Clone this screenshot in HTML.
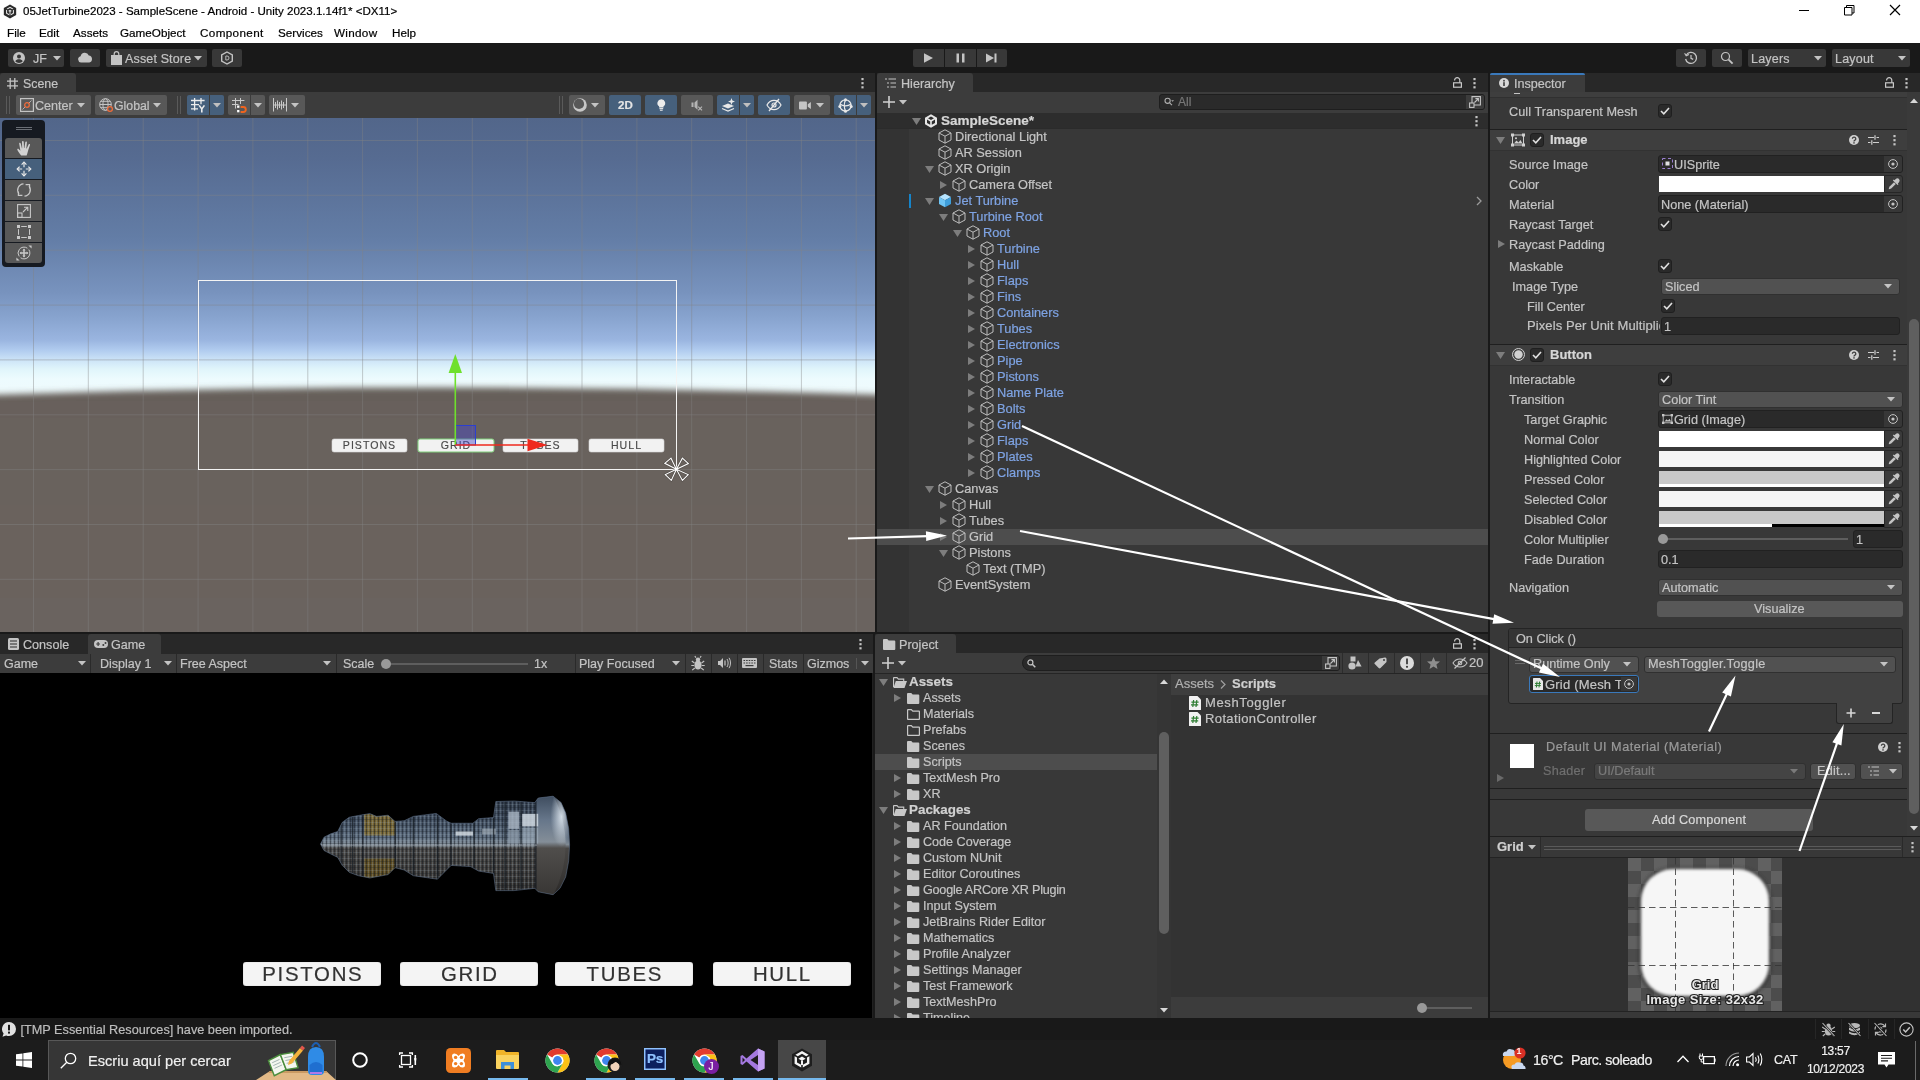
<!DOCTYPE html>
<html><head><meta charset="utf-8"><title>Unity</title>
<style>
*{box-sizing:border-box}
html,body{margin:0;padding:0}
body{width:1920px;height:1080px;position:relative;overflow:hidden;background:#191919;font:12.5px "Liberation Sans",sans-serif;color:#c4c4c4;line-height:16px}
.a{position:absolute}
.t{position:absolute;white-space:nowrap;line-height:16px;-webkit-text-stroke:0.2px}
.b{font-weight:bold}
.btn{position:absolute;background:#585858;border-radius:2px}
.tb{position:absolute;background:#383838;border-radius:2px}
.on{background:#46607c}
svg{position:absolute;overflow:visible}
.fld{position:absolute;background:#2a2a2a;border:1px solid #212121;border-radius:3px;height:18px}
.dd{position:absolute;background:#515151;border:1px solid #303030;border-radius:3px;height:18px}
.cb{position:absolute;width:14px;height:14px;background:#2a2a2a;border:1px solid #1f1f1f;border-radius:3px}
.pre{color:#7ea3e3}
</style></head>
<body>
<div id="root" style="position:absolute;left:0;top:0;width:1920px;height:1080px;will-change:transform;overflow:hidden">

<!-- Windows title bar + menu -->
<div class="a" style="left:0;top:0;width:1920px;height:43px;background:#fff"></div>
<svg style="left:3px;top:3.5px" width="14" height="15" viewBox="0 0 17 18"><path d="M8.5 0.5 L16 4.8 V13.2 L8.5 17.5 L1 13.2 V4.8 Z" fill="#2b2b2b"/><path d="M8.5 3.2 L12.6 5.6 L11.3 6.4 L8.5 4.8 L5.7 6.4 L4.4 5.6 Z M3.7 6.8 L5 7.5 V10.7 L7.8 12.3 V13.9 L3.7 11.5 Z M13.3 6.8 V11.5 L9.2 13.9 V12.3 L12 10.7 V7.5 Z M8.5 7 L10.8 8.3 L8.5 9.6 L6.2 8.3 Z" fill="#e8e8e8"/><path d="M8.5 9.6 V12.3" stroke="#e8e8e8" stroke-width="1.2"/></svg>
<div class="t" style="left:23px;top:3px;font-size:11.55px;color:#000">05JetTurbine2023 - SampleScene - Android - Unity 2023.1.14f1* &lt;DX11&gt;</div>
<div class="t" style="left:7px;top:25px;font-size:11.7px;color:#000">File</div>
<div class="t" style="left:39px;top:25px;font-size:11.7px;color:#000">Edit</div>
<div class="t" style="left:73px;top:25px;font-size:11.7px;color:#000">Assets</div>
<div class="t" style="left:120px;top:25px;font-size:11.7px;color:#000">GameObject</div>
<div class="t" style="left:200px;top:25px;font-size:11.7px;letter-spacing:.35px;color:#000">Component</div>
<div class="t" style="left:278px;top:25px;font-size:11.7px;color:#000">Services</div>
<div class="t" style="left:334px;top:25px;font-size:11.7px;letter-spacing:.3px;color:#000">Window</div>
<div class="t" style="left:392px;top:25px;font-size:11.7px;color:#000">Help</div>
<svg style="left:1790px;top:0" width="130" height="22" viewBox="0 0 130 22" fill="none" stroke="#000" stroke-width="1"><path d="M9 10.5 H19"/><path d="M54.5 7.5 H62 V15 H54.5 Z M56.5 7.5 V5.5 H64 V13 H62"/><path d="M100 5 L110 15 M110 5 L100 15" stroke-width="1.2"/></svg>

<!-- Unity main toolbar -->
<div class="a" style="left:0;top:43px;width:1920px;height:30px;background:#191919"></div>
<div class="tb" style="left:8px;top:49px;width:56px;height:18px"></div>
<svg style="left:13px;top:52px" width="12" height="12" viewBox="0 0 12 12"><circle cx="6" cy="6" r="6" fill="#c4c4c4"/><circle cx="6" cy="4.4" r="2" fill="#383838"/><path d="M2.3 9.3 C3 7.6 4.5 7.2 6 7.2 S9 7.6 9.7 9.3 C8.8 10.5 7.5 11 6 11 S3.2 10.5 2.3 9.3Z" fill="#383838"/></svg>
<div class="t" style="left:33px;top:50.6px;font-size:12.5px;color:#c4c4c4">JF</div>
<svg style="left:53px;top:56px" width="8" height="5" viewBox="0 0 8 5"><path d="M0 0 H8 L4 4.5 Z" fill="#c4c4c4"/></svg>
<div class="tb" style="left:70px;top:49px;width:30px;height:18px"></div>
<svg style="left:77px;top:52px" width="16" height="11" viewBox="0 0 16 11"><path d="M4 10.5 A3.2 3.2 0 0 1 3.6 4.2 A4.3 4.3 0 0 1 11.8 3.6 A3.5 3.5 0 0 1 12.3 10.5 Z" fill="#c4c4c4"/></svg>
<div class="tb" style="left:106px;top:49px;width:101px;height:18px"></div>
<svg style="left:111px;top:51px" width="11" height="14" viewBox="0 0 11 14"><path d="M0 4 H11 V14 H0 Z" fill="#c4c4c4"/><path d="M3.2 5 V3 A2.3 2.3 0 0 1 7.8 3 V5" fill="none" stroke="#c4c4c4" stroke-width="1.2"/></svg>
<div class="t" style="left:125px;top:50.6px;font-size:12.5px;letter-spacing:.15px">Asset Store</div>
<svg style="left:194px;top:56px" width="8" height="5" viewBox="0 0 8 5"><path d="M0 0 H8 L4 4.5 Z" fill="#c4c4c4"/></svg>
<div class="tb" style="left:212px;top:49px;width:30px;height:18px"></div>
<svg style="left:220px;top:51px" width="14" height="14" viewBox="0 0 14 14" fill="none" stroke="#c4c4c4"><path d="M7 1 L12.3 4 V10 L7 13 L1.7 10 V4 Z" stroke-width="1.4"/><path d="M5.8 5 H7 A2 2 0 0 1 7 9 H5.8 Z" stroke-width="0.9"/></svg>

<div class="tb" style="left:913px;top:49px;width:31px;height:18px;border-radius:2px 0 0 2px"></div>
<div class="tb" style="left:945px;top:49px;width:31px;height:18px;border-radius:0"></div>
<div class="tb" style="left:977px;top:49px;width:30px;height:18px;border-radius:0 2px 2px 0"></div>
<svg style="left:913px;top:49px" width="94" height="18" viewBox="0 0 94 18" fill="#c4c4c4"><path d="M11 4.2 L20 9 L11 13.8 Z"/><path d="M43.5 4.5 H46 V13.5 H43.5 Z M49 4.5 H51.5 V13.5 H49 Z"/><path d="M73 4.5 L81 9 L73 13.5 Z M81.5 4.5 H83.5 V13.5 H81.5 Z"/></svg>

<div class="tb" style="left:1676px;top:49px;width:30px;height:18px"></div>
<svg style="left:1684px;top:51px" width="14" height="14" viewBox="0 0 14 14" fill="none" stroke="#c4c4c4" stroke-width="1.3"><path d="M2.2 4.2 A5.5 5.5 0 1 1 1.6 8"/><path d="M0.6 2.2 L2.2 4.8 L5 3.6" stroke-width="1.1"/><path d="M7 4 V7.3 L9.2 8.4" stroke-width="1.2"/></svg>
<div class="tb" style="left:1712px;top:49px;width:30px;height:18px"></div>
<svg style="left:1720px;top:51px" width="14" height="14" viewBox="0 0 14 14" fill="none" stroke="#c4c4c4"><circle cx="5.5" cy="5.5" r="4" stroke-width="1.2"/><path d="M8.6 8.6 L12.6 12.6" stroke-width="1.8"/></svg>
<div class="tb" style="left:1748px;top:49px;width:78px;height:18px"></div>
<div class="t" style="left:1751px;top:50.6px;font-size:12.5px;letter-spacing:.2px">Layers</div>
<svg style="left:1814px;top:56px" width="8" height="5" viewBox="0 0 8 5"><path d="M0 0 H8 L4 4.5 Z" fill="#c4c4c4"/></svg>
<div class="tb" style="left:1832px;top:49px;width:78px;height:18px"></div>
<div class="t" style="left:1835px;top:50.6px;font-size:12.5px;letter-spacing:.2px">Layout</div>
<svg style="left:1898px;top:56px" width="8" height="5" viewBox="0 0 8 5"><path d="M0 0 H8 L4 4.5 Z" fill="#c4c4c4"/></svg>

<!-- Scene panel -->
<div class="a" style="left:0;top:73px;width:875px;height:19px;background:#282828"></div>
<div class="a" style="left:0;top:73px;width:76px;height:20px;background:#3c3c3c;border-radius:3px 3px 0 0"></div>
<svg style="left:7px;top:78px" width="11" height="11" viewBox="0 0 11 11" stroke="#c4c4c4" stroke-width="1.3" fill="none"><path d="M3.2 0 V11 M7.8 0 V11 M0 3.2 H11 M0 7.8 H11"/></svg>
<div class="t" style="left:23px;top:75.6px;font-size:12.4px">Scene</div>
<svg style="left:861px;top:77px" width="3" height="11" viewBox="0 0 3 11" fill="#c4c4c4"><rect x="0.4" y="1" width="2.2" height="2.2"/><rect x="0.4" y="5.1" width="2.2" height="2.2"/><rect x="0.4" y="9.2" width="2.2" height="2.2"/></svg>
<div class="a" style="left:0;top:92px;width:875px;height:26px;background:#3c3c3c"></div>
<div class="a" style="left:6px;top:96px;width:1px;height:18px;background:#5a5a5a"></div>
<div class="a" style="left:9px;top:96px;width:1px;height:18px;background:#5a5a5a"></div>
<div class="a" style="left:177px;top:96px;width:1px;height:18px;background:#5a5a5a"></div>
<div class="a" style="left:180px;top:96px;width:1px;height:18px;background:#5a5a5a"></div>
<div class="a" style="left:559px;top:96px;width:1px;height:18px;background:#5a5a5a"></div>
<div class="a" style="left:562px;top:96px;width:1px;height:18px;background:#5a5a5a"></div>
<div class="btn" style="left:16px;top:95px;width:75px;height:20px;border-radius:2px"></div>
<svg style="left:20px;top:98px" width="14" height="14" viewBox="0 0 14 14" fill="none"><rect x="0.6" y="0.6" width="12.8" height="12.8" stroke="#c4c4c4" stroke-width="1.2"/><path d="M2.5 11.5 L11.5 2.5" stroke="#c4c4c4" stroke-width="0.8"/><circle cx="7" cy="7" r="2.3" stroke="#ef6b3a" stroke-width="1.3" fill="#585858"/></svg>
<div class="t" style="left:35px;top:97.5px;font-size:12.6px">Center</div>
<svg style="left:77px;top:103px" width="8" height="5" viewBox="0 0 8 5"><path d="M0 0 H8 L4 4.5 Z" fill="#c4c4c4"/></svg>
<div class="btn" style="left:95px;top:95px;width:72px;height:20px;border-radius:2px"></div>
<svg style="left:99px;top:98px" width="15" height="15" viewBox="0 0 15 15" fill="none" stroke="#c4c4c4" stroke-width="1"><circle cx="6.5" cy="6.5" r="5.8"/><ellipse cx="6.5" cy="6.5" rx="2.6" ry="5.8"/><path d="M0.7 6.5 H12.3 M1.8 3.3 H11.2 M1.8 9.7 H11.2"/><circle cx="11" cy="11" r="2.4" stroke="#ef6b3a" stroke-width="1.3" fill="#585858"/></svg>
<div class="t" style="left:114px;top:97.5px;font-size:12.3px">Global</div>
<svg style="left:153px;top:103px" width="8" height="5" viewBox="0 0 8 5"><path d="M0 0 H8 L4 4.5 Z" fill="#c4c4c4"/></svg>
<div class="btn on" style="left:187px;top:95px;width:22px;height:20px;border-radius:2px 0 0 2px"></div>
<div class="btn on" style="left:210px;top:95px;width:14px;height:20px;border-radius:0 2px 2px 0"></div>
<svg style="left:191px;top:98px" width="14" height="15" viewBox="0 0 14 15" fill="none" stroke="#ececec" stroke-width="1.3"><path d="M3.6 0 V12.6 M10 0 V6.2 M0 2.5 H13.6 M0 6.6 H8 M0 10.8 H7"/><path d="M8.2 7.4 L10.8 11 L13.4 7.4 M10.8 11 V14.6" stroke-width="1.6"/></svg>
<svg style="left:213px;top:103px" width="8" height="5" viewBox="0 0 8 5"><path d="M0 0 H8 L4 4.5 Z" fill="#c0c0c0"/></svg>
<div class="btn" style="left:228px;top:95px;width:22px;height:20px;border-radius:2px 0 0 2px"></div>
<div class="btn" style="left:251px;top:95px;width:14px;height:20px;border-radius:0 2px 2px 0"></div>
<svg style="left:232px;top:98px" width="15" height="15" viewBox="0 0 15 15" fill="none" stroke="#c8c8c8" stroke-width="1.1"><path d="M3.5 0 V10.5 M8.5 0 V6 M0 2.5 H12.4 M0 6.5 H6.5" stroke-width="1"/><rect x="5.1" y="7.5" width="2.3" height="2.3" fill="#fff" stroke="none"/><rect x="5.1" y="12" width="2.3" height="2.3" fill="#fff" stroke="none"/><path d="M8.6 9 H11.3 A2.5 2.5 0 0 1 11.3 14 H8.6" stroke="#f0641e" stroke-width="1.9"/></svg>
<svg style="left:254px;top:103px" width="8" height="5" viewBox="0 0 8 5"><path d="M0 0 H8 L4 4.5 Z" fill="#c4c4c4"/></svg>
<div class="btn" style="left:269px;top:95px;width:36px;height:20px;border-radius:2px"></div>
<svg style="left:273px;top:98px" width="14" height="14" viewBox="0 0 14 14" fill="none" stroke="#c8c8c8" stroke-width="1"><path d="M0.5 0 V13.5 M13.5 0 V13.5 M0.5 7 H13.5 M2.5 4 V10 M4.5 2.5 V11.5 M6.5 4 V10 M8.5 2.5 V11.5 M10.5 4 V10"/></svg>
<svg style="left:291px;top:103px" width="8" height="5" viewBox="0 0 8 5"><path d="M0 0 H8 L4 4.5 Z" fill="#c4c4c4"/></svg>
<div class="btn" style="left:569px;top:95px;width:36px;height:20px;border-radius:2px"></div>
<svg style="left:573px;top:98px" width="14" height="14" viewBox="0 0 14 14"><circle cx="7" cy="7" r="6.8" fill="#c8c8c8"/><circle cx="6" cy="5.9" r="5.1" fill="#585858"/></svg>
<svg style="left:591px;top:103px" width="8" height="5" viewBox="0 0 8 5"><path d="M0 0 H8 L4 4.5 Z" fill="#c4c4c4"/></svg>
<div class="btn on" style="left:609px;top:95px;width:32px;height:20px;border-radius:2px"></div>
<div class="t b" style="left:618px;top:97px;font-size:11.5px;color:#e4e4e4">2D</div>
<div class="btn on" style="left:645px;top:95px;width:32px;height:20px;border-radius:2px"></div>
<svg style="left:656.5px;top:99px" width="8.6" height="12" viewBox="0 0 10 14" fill="#ececec"><path d="M5 0.3 A4.5 4.5 0 0 1 7.6 8.5 V9.8 H2.4 V8.5 A4.5 4.5 0 0 1 5 0.3Z"/><rect x="2.8" y="10.6" width="4.4" height="1.3"/><rect x="3.4" y="12.5" width="3.2" height="1.2"/></svg>
<div class="btn" style="left:681px;top:95px;width:32px;height:20px;border-radius:2px"></div>
<svg style="left:691px;top:99px" width="14" height="12" viewBox="0 0 14 12" fill="none" stroke="#b4b4b4"><path d="M0.5 3.5 H2.5 V8 H0.5 Z M3.5 3.5 L6.5 0.8 V10.7 L3.5 8Z" fill="#b4b4b4" stroke="none"/><path d="M7.2 7.6 L11 11.4 M11 7.6 L7.2 11.4" stroke-width="1.2"/></svg>
<div class="btn on" style="left:717px;top:95px;width:22px;height:20px;border-radius:2px 0 0 2px"></div>
<div class="btn on" style="left:740px;top:95px;width:14px;height:20px;border-radius:0 2px 2px 0"></div>
<svg style="left:721px;top:98px" width="15" height="14" viewBox="0 0 15 14" fill="#e8e8e8"><path d="M7 5.5 L13 8 L7 10.5 L1 8 Z"/><path d="M1 10.5 L7 13 L13 10.5" fill="none" stroke="#e8e8e8" stroke-width="1.2"/><path d="M10.5 0 L11.4 2.6 L14 3.5 L11.4 4.4 L10.5 7 L9.6 4.4 L7 3.5 L9.6 2.6Z"/></svg>
<svg style="left:743px;top:103px" width="8" height="5" viewBox="0 0 8 5"><path d="M0 0 H8 L4 4.5 Z" fill="#c0c0c0"/></svg>
<div class="btn on" style="left:758px;top:95px;width:32px;height:20px;border-radius:2px"></div>
<svg style="left:766px;top:98px" width="16" height="14" viewBox="0 0 16 14" fill="none" stroke="#e8e8e8" stroke-width="1.2"><path d="M1 7 C3 3.2 5.5 2.3 8 2.3 S13 3.2 15 7 C13 10.800000000000001 10.5 11.7 8 11.7 S3 10.8 1 7Z"/><circle cx="8" cy="7" r="2" /><path d="M3 13 L13 1" stroke-width="1.3"/></svg>
<div class="btn" style="left:794px;top:95px;width:36px;height:20px;border-radius:2px"></div>
<svg style="left:799px;top:100.5px" width="12.3" height="9" viewBox="0 0 14 10" fill="#c4c4c4"><rect x="0" y="0.5" width="9" height="9" rx="1"/><path d="M10 3.5 L13.5 1 V9 L10 6.5Z"/></svg>
<svg style="left:816px;top:103px" width="8" height="5" viewBox="0 0 8 5"><path d="M0 0 H8 L4 4.5 Z" fill="#c4c4c4"/></svg>
<div class="btn on" style="left:834px;top:95px;width:22px;height:20px;border-radius:2px 0 0 2px"></div>
<div class="btn on" style="left:857px;top:95px;width:14px;height:20px;border-radius:0 2px 2px 0"></div>
<svg style="left:838px;top:98px" width="15" height="15" viewBox="0 0 15 15" fill="none" stroke="#e8e8e8" stroke-width="1.3"><circle cx="7.5" cy="7.5" r="5.6"/><path d="M2 6 C5 8.5 10 8.5 13 6 M7.5 2 C6 5 6 10 7.5 13"/><circle cx="7.5" cy="1.8" r="1.5" fill="#e8e8e8" stroke="none"/><circle cx="1.8" cy="8.5" r="1.5" fill="#e8e8e8" stroke="none"/><circle cx="13.2" cy="8.5" r="1.5" fill="#e8e8e8" stroke="none"/><circle cx="7.5" cy="13.2" r="1.5" fill="#e8e8e8" stroke="none"/></svg>
<svg style="left:860px;top:103px" width="8" height="5" viewBox="0 0 8 5"><path d="M0 0 H8 L4 4.5 Z" fill="#c0c0c0"/></svg>
<div class="a" style="left:0;top:118px;width:875px;height:514px;overflow:hidden;background:linear-gradient(to bottom,#52668a 0px,#566b91 40px,#637da6 120px,#7893be 175px,#88a4cf 200px,#9ab5e0 222px,#b0cbef 232px,#cfe6f8 243px,#e0f5fb 251px,#edfbfe 261px,#f0fafb 290px)">
<svg style="left:0;top:0" width="875" height="514" viewBox="0 118 875 514"><defs><filter id="gb" x="-5%" y="-5%" width="110%" height="110%"><feGaussianBlur stdDeviation="3"/></filter><linearGradient id="gg" x1="0" y1="0" x2="0" y2="1"><stop offset="0" stop-color="#655e59"/><stop offset="0.12" stop-color="#69625d"/><stop offset="1" stop-color="#6b635e"/></linearGradient></defs><path d="M-40 396 Q437 379 915 396 V660 H-40Z" fill="url(#gg)" filter="url(#gb)"/></svg>
<svg style="left:0;top:0" width="875" height="514" viewBox="0 118 875 514">
<path d="M33.5 118 V632 M88.3 118 V632 M143.2 118 V632 M198.1 118 V632 M252.9 118 V632 M307.8 118 V632 M362.6 118 V632 M417.4 118 V632 M472.3 118 V632 M527.2 118 V632 M582.0 118 V632 M636.9 118 V632 M691.7 118 V632 M746.6 118 V632 M801.4 118 V632 M856.2 118 V632 M0 140.5 H875 M0 195.3 H875 M0 250.2 H875 M0 305.1 H875 M0 359.9 H875 M0 414.8 H875 M0 469.6 H875 M0 524.5 H875 M0 579.3 H875" stroke="rgba(132,132,132,0.42)" stroke-width="1" fill="none"/>
<rect x="198.5" y="280.5" width="478" height="189" fill="none" stroke="#f4f4f4" stroke-width="1"/>
<rect x="332" y="439" width="75" height="13" rx="2" fill="#f2f2f2" stroke="#d8d8d8" stroke-width="0.6"/>
<text x="369.5" y="448.9" text-anchor="middle" font-family="Liberation Sans, sans-serif" font-size="10.6" fill="#4a4a4a" letter-spacing="1" stroke="#4a4a4a" stroke-width="0.15">PISTONS</text>
<rect x="418" y="439" width="76" height="13" rx="2" fill="#f2f2f2" stroke="#7fd07a" stroke-width="1"/>
<text x="456.0" y="448.9" text-anchor="middle" font-family="Liberation Sans, sans-serif" font-size="10.6" fill="#4a4a4a" letter-spacing="1" stroke="#4a4a4a" stroke-width="0.15">GRID</text>
<rect x="503" y="439" width="75" height="13" rx="2" fill="#f2f2f2" stroke="#d8d8d8" stroke-width="0.6"/>
<text x="540.5" y="448.9" text-anchor="middle" font-family="Liberation Sans, sans-serif" font-size="10.6" fill="#4a4a4a" letter-spacing="1" stroke="#4a4a4a" stroke-width="0.15">TUBES</text>
<rect x="589" y="439" width="75" height="13" rx="2" fill="#f2f2f2" stroke="#d8d8d8" stroke-width="0.6"/>
<text x="626.5" y="448.9" text-anchor="middle" font-family="Liberation Sans, sans-serif" font-size="10.6" fill="#4a4a4a" letter-spacing="1" stroke="#4a4a4a" stroke-width="0.15">HULL</text>
<rect x="455.5" y="425.5" width="20" height="19.5" fill="rgba(70,70,200,0.45)" stroke="#2b3fd0" stroke-width="1"/>
<path d="M455.3 445 V372" stroke="#6fe02c" stroke-width="1.6"/><path d="M455.3 354 L448.6 373 H462 Z" fill="#6fe02c"/>
<path d="M455.3 445 H528" stroke="#ef2a1e" stroke-width="1.6"/><path d="M547.5 445 L527.5 438.8 V451.2 Z" fill="#ef2a1e"/>
<g transform="translate(676.4,469.3)" fill="none" stroke-linejoin="miter"><path d="M0 0 L-11.6 -6 L-5.4 -11.1Z M0 0 L6 -11.1 L12 -5.8Z M0 0 L-11.1 5.3 L-5.1 11.1Z M0 0 L6 11.1 L11.8 5.3Z" stroke="#3c3835" stroke-width="2.2" opacity="0.55"/><path d="M0 0 L-11.6 -6 L-5.4 -11.1Z M0 0 L6 -11.1 L12 -5.8Z M0 0 L-11.1 5.3 L-5.1 11.1Z M0 0 L6 11.1 L11.8 5.3Z" stroke="#fff" stroke-width="1.05"/></g>
</svg>
</div>
<div class="a" style="left:2px;top:120px;width:43px;height:147px;background:#161a21;border-radius:4px"></div>
<div class="a" style="left:16px;top:127px;width:16px;height:1px;background:#6a6e75"></div><div class="a" style="left:16px;top:129px;width:16px;height:1px;background:#6a6e75"></div>
<div class="btn" style="left:5px;top:138px;width:37px;height:20px;border-radius:3px 3px 0 0"></div>
<div class="btn on" style="left:5px;top:159px;width:37px;height:20px;border-radius:0"></div>
<div class="btn" style="left:5px;top:180px;width:37px;height:20px;border-radius:0"></div>
<div class="btn" style="left:5px;top:201px;width:37px;height:20px;border-radius:0"></div>
<div class="btn" style="left:5px;top:222px;width:37px;height:20px;border-radius:0"></div>
<div class="btn" style="left:5px;top:243px;width:37px;height:20px;border-radius:0 0 3px 3px"></div>
<svg style="left:17px;top:140px" width="14" height="16" viewBox="0 0 14 16" fill="#d2d2d2"><path d="M4.2 15.5 C3 14 1 11.4 0.4 10 C0 9 1 8.4 1.8 9.2 L3.4 10.8 L2.2 3.8 C2 2.7 3.4 2.4 3.7 3.5 L4.9 8.2 L5.2 8.2 L5 1.8 C5 0.6 6.6 0.6 6.7 1.8 L7 8 L7.4 8 L8.3 2.2 C8.5 1.1 10 1.3 9.9 2.5 L9.3 8.4 L9.7 8.5 L11.6 4.4 C12.1 3.4 13.4 4 13 5.1 L11.2 10.2 C10.6 12.2 10.4 14 9.6 15.5 Z"/></svg>
<svg style="left:16px;top:161px" width="16" height="16" viewBox="0 0 16 16" fill="none" stroke="#e8e8e8" stroke-width="1.2"><path d="M8 1.5 V6.2 M8 9.8 V14.5 M1.5 8 H6.2 M9.8 8 H14.5"/><path d="M5.6 3.6 L8 1.2 L10.4 3.6 M5.6 12.4 L8 14.8 L10.4 12.4 M3.6 5.6 L1.2 8 L3.6 10.4 M12.4 5.6 L14.8 8 L12.4 10.4"/></svg>
<svg style="left:16px;top:182px" width="16" height="16" viewBox="0 0 16 16" fill="none" stroke="#c8c8c8" stroke-width="1.2"><path d="M8.5 14.2 A6.2 6.2 0 0 0 13 4.2 M7.5 1.8 A6.2 6.2 0 0 0 3 11.8"/><path d="M9.6 2.6 H13.6 V6.6 M6.4 13.4 H2.4 V9.4"/></svg>
<svg style="left:17px;top:204px" width="14" height="14" viewBox="0 0 14 14" fill="none" stroke="#c8c8c8" stroke-width="1.1"><rect x="0.6" y="0.6" width="12.8" height="12.8"/><rect x="0.6" y="9" width="4.4" height="4.4"/><path d="M6 8 L10.6 3.4 M7 3.2 H10.8 V7"/></svg>
<svg style="left:17px;top:225px" width="14" height="14" viewBox="0 0 14 14" fill="#c8c8c8" stroke="#c8c8c8" stroke-width="1"><path d="M4.2 1.5 H9.8 M4.2 12.5 H9.8 M1.5 4.2 V9.8 M12.5 4.2 V9.8" fill="none"/><rect x="0" y="0" width="3" height="3" stroke="none"/><rect x="11" y="0" width="3" height="3" stroke="none"/><rect x="0" y="11" width="3" height="3" stroke="none"/><rect x="11" y="11" width="3" height="3" stroke="none"/></svg>
<svg style="left:16px;top:245px" width="16" height="16" viewBox="0 0 16 16" fill="none" stroke="#c8c8c8" stroke-width="1"><path d="M3.2 4.6 A5.8 5.8 0 0 1 11.4 3.2 M12.8 4.6 A5.800000000000001 5.8 0 0 1 11.4 12.8 M12.8 11.4 A5.8 5.8 0 0 1 4.6 12.8 M3.2 11.4 A5.8 5.8 0 0 1 3.2 4.6" /><path d="M8 4.2 V11.8 M4.2 8 H11.8" stroke-width="1.5"/><path d="M6.4 5.4 L8 3.6 L9.6 5.4Z M6.4 10.6 L8 12.4 L9.6 10.6Z M5.4 6.4 L3.6 8 L5.4 9.6Z M10.6 6.4 L12.4 8 L10.6 9.6Z" fill="#c8c8c8" stroke="none"/><path d="M12.4 0.4 H15.6 V3.6Z M0.4 12.4 V15.6 H3.6Z" fill="#c8c8c8" stroke="none"/></svg>
<!-- Game panel -->
<div class="a" style="left:0;top:634px;width:873px;height:20px;background:#282828"></div>
<div class="a" style="left:88px;top:634px;width:73px;height:20px;background:#3c3c3c;border-radius:3px 3px 0 0"></div>
<svg style="left:8px;top:638px" width="11" height="12" viewBox="0 0 11 12"><rect x="0" y="0" width="11" height="12" rx="1.5" fill="#c4c4c4"/><path d="M2 3 H9 M2 6 H9 M2 9 H9" stroke="#282828" stroke-width="1.2"/></svg>
<div class="t" style="left:23px;top:636.6px;font-size:12.6px">Console</div>
<svg style="left:94px;top:640px" width="14" height="8" viewBox="0 0 14 8"><rect x="0" y="0" width="14" height="8" rx="4" fill="#c4c4c4"/><path d="M2.2 4 H6 M4.1 2.1 V5.9" stroke="#3c3c3c" stroke-width="1.2"/><circle cx="9.3" cy="5" r="1" fill="#3c3c3c"/><circle cx="11.5" cy="3" r="1" fill="#3c3c3c"/></svg>
<div class="t" style="left:111px;top:636.6px;font-size:12.6px">Game</div>
<svg style="left:859px;top:638px" width="3" height="11" viewBox="0 0 3 11" fill="#c4c4c4"><rect x="0.4" y="1" width="2.2" height="2.2"/><rect x="0.4" y="5.1" width="2.2" height="2.2"/><rect x="0.4" y="9.2" width="2.2" height="2.2"/></svg>
<div class="a" style="left:0;top:654px;width:873px;height:20px;background:#3c3c3c"></div>
<div class="a" style="left:90px;top:654px;width:1px;height:19px;background:#2a2a2a"></div>
<div class="a" style="left:176px;top:654px;width:1px;height:19px;background:#2a2a2a"></div>
<div class="a" style="left:336px;top:654px;width:1px;height:19px;background:#2a2a2a"></div>
<div class="a" style="left:575px;top:654px;width:1px;height:19px;background:#2a2a2a"></div>
<div class="a" style="left:685px;top:654px;width:1px;height:19px;background:#2a2a2a"></div>
<div class="a" style="left:711px;top:654px;width:1px;height:19px;background:#2a2a2a"></div>
<div class="a" style="left:737px;top:654px;width:1px;height:19px;background:#2a2a2a"></div>
<div class="a" style="left:763px;top:654px;width:1px;height:19px;background:#2a2a2a"></div>
<div class="a" style="left:803px;top:654px;width:1px;height:19px;background:#2a2a2a"></div>
<div class="t" style="left:4px;top:655.6px;font-size:12.5px">Game</div>
<svg style="left:78px;top:661px" width="8" height="5" viewBox="0 0 8 5"><path d="M0 0 H8 L4 4.5 Z" fill="#c4c4c4"/></svg>
<div class="t" style="left:100px;top:655.6px;font-size:12.5px">Display 1</div>
<svg style="left:164px;top:661px" width="8" height="5" viewBox="0 0 8 5"><path d="M0 0 H8 L4 4.5 Z" fill="#c4c4c4"/></svg>
<div class="t" style="left:180px;top:655.6px;font-size:12.5px">Free Aspect</div>
<svg style="left:323px;top:661px" width="8" height="5" viewBox="0 0 8 5"><path d="M0 0 H8 L4 4.5 Z" fill="#c4c4c4"/></svg>
<div class="t" style="left:343px;top:655.6px;font-size:12.5px">Scale</div>
<div class="a" style="left:385px;top:663px;width:143px;height:2px;background:#5e5e5e"></div>
<div class="a" style="left:381px;top:659px;width:10px;height:10px;border-radius:5px;background:#999"></div>
<div class="t" style="left:534px;top:655.6px;font-size:12.5px">1x</div>
<div class="t" style="left:579px;top:655.6px;font-size:12.5px">Play Focused</div>
<svg style="left:672px;top:661px" width="8" height="5" viewBox="0 0 8 5"><path d="M0 0 H8 L4 4.5 Z" fill="#c4c4c4"/></svg>
<svg style="left:691px;top:656px" width="14" height="15" viewBox="0 0 14 15" fill="#c4c4c4"><ellipse cx="7" cy="9" rx="3.6" ry="4.6"/><circle cx="7" cy="3.6" r="2.2"/><path d="M3.5 7 L0.8 5 M10.5 7 L13.2 5 M3.2 9.5 H0.3 M10.8 9.5 H13.7 M3.8 12 L1.2 14.2 M10.2 12 L12.8 14.2 M5 1.6 L3.8 0.2 M9 1.6 L10.2 0.2" stroke="#c4c4c4" stroke-width="1.1" fill="none"/></svg>
<svg style="left:717px;top:657px" width="14" height="12" viewBox="0 0 14 12" fill="none" stroke="#c4c4c4"><path d="M1 4 H3 L6 1 V11 L3 8 H1 Z" fill="#c4c4c4" stroke="none"/><path d="M8 3.5 V8.5" stroke-width="1.2"/><path d="M10 2 C11.500000000000002 4 11.5 8 10 10 M12 0.8 C14 3.5 14 8.5 12 11.2" stroke-width="1"/></svg>
<svg style="left:742px;top:658px" width="15" height="10" viewBox="0 0 15 10"><rect x="0" y="0" width="15" height="10" rx="1" fill="#c4c4c4"/><path d="M1.5 2.5 H13.5 M1.5 5 H13.5" stroke="#3c3c3c" stroke-width="1.2" stroke-dasharray="1.6 1"/><path d="M3.5 7.6 H11.5" stroke="#3c3c3c" stroke-width="1.2"/></svg>
<div class="t" style="left:769px;top:655.6px;font-size:12.5px">Stats</div>
<div class="t" style="left:807px;top:655.6px;font-size:12.5px">Gizmos</div>
<svg style="left:861px;top:661px" width="8" height="5" viewBox="0 0 8 5"><path d="M0 0 H8 L4 4.5 Z" fill="#c4c4c4"/></svg>
<div class="a" style="left:0;top:673px;width:872px;height:345px;background:#000"></div>
<div class="a" style="left:872px;top:673px;width:1px;height:345px;background:#202020"></div>
<div class="a" style="left:856px;top:658px;width:1px;height:11px;background:#555"></div>
<div class="a" style="left:243px;top:962.3px;width:138px;height:24px;background:#f4f4f4;border-radius:3px;box-shadow:inset 0 0 1px #999;color:#323232;font-size:20.4px;line-height:25px;text-align:center;letter-spacing:1.7px;padding-left:1.7px;-webkit-text-stroke:0.2px #323232">PISTONS</div>
<div class="a" style="left:400px;top:962.3px;width:138px;height:24px;background:#f4f4f4;border-radius:3px;box-shadow:inset 0 0 1px #999;color:#323232;font-size:20.4px;line-height:25px;text-align:center;letter-spacing:1.7px;padding-left:1.7px;-webkit-text-stroke:0.2px #323232">GRID</div>
<div class="a" style="left:555px;top:962.3px;width:138px;height:24px;background:#f4f4f4;border-radius:3px;box-shadow:inset 0 0 1px #999;color:#323232;font-size:20.4px;line-height:25px;text-align:center;letter-spacing:1.7px;padding-left:1.7px;-webkit-text-stroke:0.2px #323232">TUBES</div>
<div class="a" style="left:712.5px;top:962.3px;width:138px;height:24px;background:#f4f4f4;border-radius:3px;box-shadow:inset 0 0 1px #999;color:#323232;font-size:20.4px;line-height:25px;text-align:center;letter-spacing:1.7px;padding-left:1.7px;-webkit-text-stroke:0.2px #323232">HULL</div>
<svg style="left:0;top:0" width="875" height="1018" viewBox="0 0 875 1018">
<defs><linearGradient id="tg" x1="0" y1="0" x2="0" y2="1"><stop offset="0" stop-color="#2c3644"/><stop offset="0.25" stop-color="#3f4c5e"/><stop offset="0.42" stop-color="#5b6a7c"/><stop offset="0.49" stop-color="#7f8993"/><stop offset="0.53" stop-color="#484644"/><stop offset="0.8" stop-color="#3a3836"/><stop offset="1" stop-color="#2a2827"/></linearGradient>
<linearGradient id="tg2" x1="0" y1="0" x2="0" y2="1"><stop offset="0" stop-color="#3c4a5c"/><stop offset="0.25" stop-color="#66768a"/><stop offset="0.47" stop-color="#848e98"/><stop offset="0.53" stop-color="#504e4c"/><stop offset="1" stop-color="#383634"/></linearGradient>
<radialGradient id="tg3" cx="0.7" cy="0.22" r="0.3"><stop offset="0" stop-color="#dfe8f0" stop-opacity="0.9"/><stop offset="1" stop-color="#dfe8f0" stop-opacity="0"/></radialGradient>
<pattern id="tp" width="4" height="6" patternUnits="userSpaceOnUse"><path d="M0.5 0 V6" stroke="#b5c5d6" stroke-width="0.7" opacity="0.3"/><path d="M2.5 0 V6" stroke="#10161d" stroke-width="1" opacity="0.45"/><path d="M0 0.5 H4" stroke="#b5c5d6" stroke-width="0.6" opacity="0.25"/><path d="M0 3.5 H4" stroke="#10161d" stroke-width="0.8" opacity="0.3"/></pattern>
<clipPath id="tc"><polygon points="320.5,844.1 324.0,837.2 330.8,833.8 337.7,831.5 342.3,822.3 349.2,817.3 358.3,815.5 369.8,813.6 376.7,816.4 388.1,815.2 395.0,821.4 404.2,820.7 413.3,816.4 436.2,813.4 446.5,821.0 451.1,823.2 472.9,823.2 478.6,818.7 493.5,817.5 495.8,801.5 514.1,801.0 534.8,802.6 538.2,798.0 553.1,796.2 561.1,802.6 565.7,812.9 568.7,828.7 569.6,844.8 568.7,860.8 565.7,876.9 560.0,888.3 553.1,894.7 538.2,891.8 534.8,888.3 514.1,890.6 495.8,890.6 493.5,873.4 478.6,871.1 470.6,866.6 451.1,865.4 446.5,870.0 437.4,879.2 413.3,875.7 404.2,870.0 395.0,867.7 388.1,874.6 369.8,878.0 358.3,875.7 349.2,872.3 342.3,865.4 337.7,857.4 330.8,854.0 324.0,850.5"/></clipPath></defs>
<polygon points="320.5,844.1 324.0,837.2 330.8,833.8 337.7,831.5 342.3,822.3 349.2,817.3 358.3,815.5 369.8,813.6 376.7,816.4 388.1,815.2 395.0,821.4 404.2,820.7 413.3,816.4 436.2,813.4 446.5,821.0 451.1,823.2 472.9,823.2 478.6,818.7 493.5,817.5 495.8,801.5 514.1,801.0 534.8,802.6 538.2,798.0 553.1,796.2 561.1,802.6 565.7,812.9 568.7,828.7 569.6,844.8 568.7,860.8 565.7,876.9 560.0,888.3 553.1,894.7 538.2,891.8 534.8,888.3 514.1,890.6 495.8,890.6 493.5,873.4 478.6,871.1 470.6,866.6 451.1,865.4 446.5,870.0 437.4,879.2 413.3,875.7 404.2,870.0 395.0,867.7 388.1,874.6 369.8,878.0 358.3,875.7 349.2,872.3 342.3,865.4 337.7,857.4 330.8,854.0 324.0,850.5" fill="url(#tg)"/>
<g clip-path="url(#tc)">
<path d="M364.1 814.1 H395.4 V835.6 H364.1Z" fill="#8a6c1e" opacity="0.7"/>
<path d="M364.1 858.5 H395.4 V879.2 H364.1Z" fill="#6a5218" opacity="0.7"/>
<rect x="320.5" y="794.4" width="215.4" height="103.1" fill="url(#tp)"/>
<path d="M535.9 796.7 L553.1 794.4 Q578.3 844.8 553.1 895.7 L535.9 892.9 Z" fill="url(#tg2)"/>
<rect x="535.9" y="794.4" width="36.7" height="100.8" fill="url(#tg3)"/>
<rect x="508.4" y="811.6" width="10.8" height="17.2" fill="#aab7c4" opacity="0.8"/>
<rect x="508.4" y="829.9" width="10.8" height="13.7" fill="#8f9dab" opacity="0.7"/>
<rect x="522.2" y="813.8" width="16.0" height="12.6" fill="#d0d9e2" opacity="0.85"/>
<rect x="522.2" y="827.6" width="16.0" height="16.0" fill="#a4b2bf" opacity="0.6"/>
<rect x="455.7" y="831.5" width="17.2" height="4.1" fill="#d6dde4" opacity="0.8"/>
<rect x="482.1" y="828.7" width="13.7" height="5.7" fill="#aab5c0" opacity="0.6"/>
<path d="M341.1 790 V900 M352.6 790 V900 M362.9 790 V900 M395.4 790 V900 M413.3 790 V900 M437.4 790 V900 M451.1 790 V900 M474.0 790 V900 M493.5 790 V900 M505.0 790 V900 M521.0 790 V900 M535.9 790 V900" stroke="#0f151c" stroke-width="1.3" opacity="0.7"/>
<path d="M320.5 845.2 H537.1" stroke="#a9b3bd" stroke-width="1.2" opacity="0.55"/>
</g>
<polygon points="320.5,844.1 324.0,837.2 330.8,833.8 337.7,831.5 342.3,822.3 349.2,817.3 358.3,815.5 369.8,813.6 376.7,816.4 388.1,815.2 395.0,821.4 404.2,820.7 413.3,816.4 436.2,813.4 446.5,821.0 451.1,823.2 472.9,823.2 478.6,818.7 493.5,817.5 495.8,801.5 514.1,801.0 534.8,802.6 538.2,798.0 553.1,796.2 561.1,802.6 565.7,812.9 568.7,828.7 569.6,844.8 568.7,860.8 565.7,876.9 560.0,888.3 553.1,894.7 538.2,891.8 534.8,888.3 514.1,890.6 495.8,890.6 493.5,873.4 478.6,871.1 470.6,866.6 451.1,865.4 446.5,870.0 437.4,879.2 413.3,875.7 404.2,870.0 395.0,867.7 388.1,874.6 369.8,878.0 358.3,875.7 349.2,872.3 342.3,865.4 337.7,857.4 330.8,854.0 324.0,850.5" fill="none" stroke="#5d7088" stroke-width="0.7" opacity="0.8"/>
</svg>
<!-- Hierarchy panel -->
<div class="a" style="left:877px;top:73px;width:611px;height:19px;background:#282828"></div>
<div class="a" style="left:877px;top:73px;width:96px;height:20px;background:#3c3c3c;border-radius:3px 3px 0 0"></div>
<svg style="left:885px;top:78px" width="11" height="10" viewBox="0 0 11 10" fill="none" stroke="#c4c4c4" stroke-width="1.1"><path d="M0 1 H2 M3.500000000000001 1 H11 M2 5 H4 M5.5 5 H11 M2 9 H4 M5.5 9 H11"/></svg>
<div class="t" style="left:901px;top:75.6px;font-size:12.6px">Hierarchy</div>
<svg style="left:1452.5px;top:77px" width="9" height="11" viewBox="0 0 9 11" fill="none" stroke="#c8c8c8" stroke-width="1.2"><rect x="0.6" y="5.8" width="7.8" height="4.4"/><path d="M1.6 3.6 V3.2 A2.6 2.6 0 0 1 6.8 3.2 V5.8"/></svg>
<svg style="left:1473px;top:78px" width="3" height="11" viewBox="0 0 3 11" fill="#c4c4c4"><rect x="0.4" y="0" width="2.2" height="2.2"/><rect x="0.4" y="4.1" width="2.2" height="2.2"/><rect x="0.4" y="8.2" width="2.2" height="2.2"/></svg>
<div class="a" style="left:877px;top:92px;width:611px;height:21px;background:#3c3c3c"></div>
<svg style="left:883px;top:96px" width="12" height="12" viewBox="0 0 12 12" stroke="#d0d0d0" stroke-width="1.6"><path d="M6 0 V12 M0 6 H12"/></svg>
<svg style="left:899px;top:100px" width="8" height="5" viewBox="0 0 8 5"><path d="M0 0 H8 L4 4.5 Z" fill="#c4c4c4"/></svg>
<div class="a" style="left:1159px;top:94px;width:326px;height:16px;background:#2a2a2a;border:1px solid #1e1e1e;border-radius:3px"></div>
<div class="a" style="left:1466px;top:95px;width:18px;height:14px;background:#3c3c3c;border-radius:0 2px 2px 0"></div>
<svg style="left:1164px;top:97px" width="10" height="10" viewBox="0 0 10 10" fill="none" stroke="#b0b0b0" stroke-width="1.1"><circle cx="3.6" cy="3.8" r="2.6"/><path d="M5.6 5.8 L8 8.200000000000001"/><path d="M7.2 3.2 H10 L8.6 4.8Z" fill="#b0b0b0" stroke="none"/></svg>
<div class="t" style="left:1178px;top:94px;font-size:12px;color:#777">All</div>
<svg style="left:1469px;top:96px" width="12" height="12" viewBox="0 0 12 12" fill="none" stroke="#c4c4c4" stroke-width="1.1"><path d="M3 0.6 H11.4 V9 H3 Z"/><rect x="0.6" y="7" width="4.4" height="4.4" fill="#3c3c3c"/><path d="M5.5 6.5 L9.2 2.8 M6.4 2.6 H9.4 V5.6"/></svg>
<div class="a" style="left:877px;top:113px;width:611px;height:519px;background:#383838"></div>
<div class="a" style="left:877px;top:113px;width:32px;height:519px;background:#333"></div>
<div class="a" style="left:877px;top:113px;width:611px;height:15px;background:#2d2d2d"></div>
<div class="a" style="left:877px;top:128px;width:611px;height:1px;background:#2b2b2b"></div>
<div class="a" style="left:877px;top:529px;width:611px;height:16px;background:#4d4d4d"></div>
<div class="a" style="left:909px;top:194px;width:2px;height:14px;background:#1684c9"></div>
<svg style="left:912px;top:118px" width="9" height="7" viewBox="0 0 9 7"><path d="M0 0 H9 L4.5 7Z" fill="#7d7d7d"/></svg>
<svg style="left:924px;top:114px" width="14" height="14" viewBox="0 0 14 14"><path d="M7 0.3 L13 3.700000000000001 V10.3 L7 13.7 L1 10.3 V3.7 Z" fill="#e6e6e6"/><path d="M7 2.6 L10 4.3 L7 6 L4 4.3Z M3 5.6 L6.2 7.4 V10.8 L3 9Z M11 5.6 V9 L7.8 10.8 V7.4Z" fill="#2d2d2d"/></svg>
<div class="t b" style="left:941px;top:113px;font-size:13.5px;color:#d6d6d6">SampleScene*</div>
<svg style="left:1475px;top:116px" width="3" height="11" viewBox="0 0 3 11" fill="#c4c4c4"><rect x="0.4" y="0" width="2.2" height="2.2"/><rect x="0.4" y="4.1" width="2.2" height="2.2"/><rect x="0.4" y="8.2" width="2.2" height="2.2"/></svg>
<svg style="left:938px;top:129px" width="14" height="15" viewBox="0 0 14 15" fill="none" stroke="#bebebe" stroke-width="1" stroke-linejoin="round"><path d="M7 0.8 L13 4 V11 L7 14.2 L1 11 V4 Z"/><path d="M1 4 L7 7.2 L13 4 M7 7.2 V14.2"/></svg>
<div class="t" style="left:955px;top:129px;font-size:12.8px">Directional Light</div>
<svg style="left:938px;top:145px" width="14" height="15" viewBox="0 0 14 15" fill="none" stroke="#bebebe" stroke-width="1" stroke-linejoin="round"><path d="M7 0.8 L13 4 V11 L7 14.2 L1 11 V4 Z"/><path d="M1 4 L7 7.2 L13 4 M7 7.2 V14.2"/></svg>
<div class="t" style="left:955px;top:145px;font-size:12.8px">AR Session</div>
<svg style="left:925px;top:166px" width="9" height="7" viewBox="0 0 9 7"><path d="M0 0 H9 L4.5 7Z" fill="#7d7d7d"/></svg>
<svg style="left:938px;top:161px" width="14" height="15" viewBox="0 0 14 15" fill="none" stroke="#bebebe" stroke-width="1" stroke-linejoin="round"><path d="M7 0.8 L13 4 V11 L7 14.2 L1 11 V4 Z"/><path d="M1 4 L7 7.2 L13 4 M7 7.2 V14.2"/></svg>
<div class="t" style="left:955px;top:161px;font-size:12.8px">XR Origin</div>
<svg style="left:940px;top:181px" width="7" height="8" viewBox="0 0 7 8"><path d="M0 0 L7 4 L0 8Z" fill="#7d7d7d"/></svg>
<svg style="left:952px;top:177px" width="14" height="15" viewBox="0 0 14 15" fill="none" stroke="#bebebe" stroke-width="1" stroke-linejoin="round"><path d="M7 0.8 L13 4 V11 L7 14.2 L1 11 V4 Z"/><path d="M1 4 L7 7.2 L13 4 M7 7.2 V14.2"/></svg>
<div class="t" style="left:969px;top:177px;font-size:12.8px">Camera Offset</div>
<svg style="left:925px;top:198px" width="9" height="7" viewBox="0 0 9 7"><path d="M0 0 H9 L4.5 7Z" fill="#7d7d7d"/></svg>
<svg style="left:938px;top:193px" width="14" height="15" viewBox="0 0 14 15"><path d="M7 0.8 L13 4 L7 7.2 L1 4 Z" fill="#b5e4ff"/><path d="M1 4 L7 7.2 V14.2 L1 11 Z" fill="#6fc5f5"/><path d="M13 4 L7 7.2 V14.2 L13 11 Z" fill="#3f9fdc"/></svg>
<div class="t pre" style="left:955px;top:193px;font-size:12.8px">Jet Turbine</div>
<svg style="left:939px;top:214px" width="9" height="7" viewBox="0 0 9 7"><path d="M0 0 H9 L4.5 7Z" fill="#7d7d7d"/></svg>
<svg style="left:952px;top:209px" width="14" height="15" viewBox="0 0 14 15" fill="none" stroke="#bebebe" stroke-width="1" stroke-linejoin="round"><path d="M7 0.8 L13 4 V11 L7 14.2 L1 11 V4 Z"/><path d="M1 4 L7 7.2 L13 4 M7 7.2 V14.2"/></svg>
<div class="t pre" style="left:969px;top:209px;font-size:12.8px">Turbine Root</div>
<svg style="left:953px;top:230px" width="9" height="7" viewBox="0 0 9 7"><path d="M0 0 H9 L4.5 7Z" fill="#7d7d7d"/></svg>
<svg style="left:966px;top:225px" width="14" height="15" viewBox="0 0 14 15" fill="none" stroke="#bebebe" stroke-width="1" stroke-linejoin="round"><path d="M7 0.8 L13 4 V11 L7 14.2 L1 11 V4 Z"/><path d="M1 4 L7 7.2 L13 4 M7 7.2 V14.2"/></svg>
<div class="t pre" style="left:983px;top:225px;font-size:12.8px">Root</div>
<svg style="left:968px;top:245px" width="7" height="8" viewBox="0 0 7 8"><path d="M0 0 L7 4 L0 8Z" fill="#7d7d7d"/></svg>
<svg style="left:980px;top:241px" width="14" height="15" viewBox="0 0 14 15" fill="none" stroke="#bebebe" stroke-width="1" stroke-linejoin="round"><path d="M7 0.8 L13 4 V11 L7 14.2 L1 11 V4 Z"/><path d="M1 4 L7 7.2 L13 4 M7 7.2 V14.2"/></svg>
<div class="t pre" style="left:997px;top:241px;font-size:12.8px">Turbine</div>
<svg style="left:968px;top:261px" width="7" height="8" viewBox="0 0 7 8"><path d="M0 0 L7 4 L0 8Z" fill="#7d7d7d"/></svg>
<svg style="left:980px;top:257px" width="14" height="15" viewBox="0 0 14 15" fill="none" stroke="#bebebe" stroke-width="1" stroke-linejoin="round"><path d="M7 0.8 L13 4 V11 L7 14.2 L1 11 V4 Z"/><path d="M1 4 L7 7.2 L13 4 M7 7.2 V14.2"/></svg>
<div class="t pre" style="left:997px;top:257px;font-size:12.8px">Hull</div>
<svg style="left:968px;top:277px" width="7" height="8" viewBox="0 0 7 8"><path d="M0 0 L7 4 L0 8Z" fill="#7d7d7d"/></svg>
<svg style="left:980px;top:273px" width="14" height="15" viewBox="0 0 14 15" fill="none" stroke="#bebebe" stroke-width="1" stroke-linejoin="round"><path d="M7 0.8 L13 4 V11 L7 14.2 L1 11 V4 Z"/><path d="M1 4 L7 7.2 L13 4 M7 7.2 V14.2"/></svg>
<div class="t pre" style="left:997px;top:273px;font-size:12.8px">Flaps</div>
<svg style="left:968px;top:293px" width="7" height="8" viewBox="0 0 7 8"><path d="M0 0 L7 4 L0 8Z" fill="#7d7d7d"/></svg>
<svg style="left:980px;top:289px" width="14" height="15" viewBox="0 0 14 15" fill="none" stroke="#bebebe" stroke-width="1" stroke-linejoin="round"><path d="M7 0.8 L13 4 V11 L7 14.2 L1 11 V4 Z"/><path d="M1 4 L7 7.2 L13 4 M7 7.2 V14.2"/></svg>
<div class="t pre" style="left:997px;top:289px;font-size:12.8px">Fins</div>
<svg style="left:968px;top:309px" width="7" height="8" viewBox="0 0 7 8"><path d="M0 0 L7 4 L0 8Z" fill="#7d7d7d"/></svg>
<svg style="left:980px;top:305px" width="14" height="15" viewBox="0 0 14 15" fill="none" stroke="#bebebe" stroke-width="1" stroke-linejoin="round"><path d="M7 0.8 L13 4 V11 L7 14.2 L1 11 V4 Z"/><path d="M1 4 L7 7.2 L13 4 M7 7.2 V14.2"/></svg>
<div class="t pre" style="left:997px;top:305px;font-size:12.8px">Containers</div>
<svg style="left:968px;top:325px" width="7" height="8" viewBox="0 0 7 8"><path d="M0 0 L7 4 L0 8Z" fill="#7d7d7d"/></svg>
<svg style="left:980px;top:321px" width="14" height="15" viewBox="0 0 14 15" fill="none" stroke="#bebebe" stroke-width="1" stroke-linejoin="round"><path d="M7 0.8 L13 4 V11 L7 14.2 L1 11 V4 Z"/><path d="M1 4 L7 7.2 L13 4 M7 7.2 V14.2"/></svg>
<div class="t pre" style="left:997px;top:321px;font-size:12.8px">Tubes</div>
<svg style="left:968px;top:341px" width="7" height="8" viewBox="0 0 7 8"><path d="M0 0 L7 4 L0 8Z" fill="#7d7d7d"/></svg>
<svg style="left:980px;top:337px" width="14" height="15" viewBox="0 0 14 15" fill="none" stroke="#bebebe" stroke-width="1" stroke-linejoin="round"><path d="M7 0.8 L13 4 V11 L7 14.2 L1 11 V4 Z"/><path d="M1 4 L7 7.2 L13 4 M7 7.2 V14.2"/></svg>
<div class="t pre" style="left:997px;top:337px;font-size:12.8px">Electronics</div>
<svg style="left:968px;top:357px" width="7" height="8" viewBox="0 0 7 8"><path d="M0 0 L7 4 L0 8Z" fill="#7d7d7d"/></svg>
<svg style="left:980px;top:353px" width="14" height="15" viewBox="0 0 14 15" fill="none" stroke="#bebebe" stroke-width="1" stroke-linejoin="round"><path d="M7 0.8 L13 4 V11 L7 14.2 L1 11 V4 Z"/><path d="M1 4 L7 7.2 L13 4 M7 7.2 V14.2"/></svg>
<div class="t pre" style="left:997px;top:353px;font-size:12.8px">Pipe</div>
<svg style="left:968px;top:373px" width="7" height="8" viewBox="0 0 7 8"><path d="M0 0 L7 4 L0 8Z" fill="#7d7d7d"/></svg>
<svg style="left:980px;top:369px" width="14" height="15" viewBox="0 0 14 15" fill="none" stroke="#bebebe" stroke-width="1" stroke-linejoin="round"><path d="M7 0.8 L13 4 V11 L7 14.2 L1 11 V4 Z"/><path d="M1 4 L7 7.2 L13 4 M7 7.2 V14.2"/></svg>
<div class="t pre" style="left:997px;top:369px;font-size:12.8px">Pistons</div>
<svg style="left:968px;top:389px" width="7" height="8" viewBox="0 0 7 8"><path d="M0 0 L7 4 L0 8Z" fill="#7d7d7d"/></svg>
<svg style="left:980px;top:385px" width="14" height="15" viewBox="0 0 14 15" fill="none" stroke="#bebebe" stroke-width="1" stroke-linejoin="round"><path d="M7 0.8 L13 4 V11 L7 14.2 L1 11 V4 Z"/><path d="M1 4 L7 7.2 L13 4 M7 7.2 V14.2"/></svg>
<div class="t pre" style="left:997px;top:385px;font-size:12.8px">Name Plate</div>
<svg style="left:968px;top:405px" width="7" height="8" viewBox="0 0 7 8"><path d="M0 0 L7 4 L0 8Z" fill="#7d7d7d"/></svg>
<svg style="left:980px;top:401px" width="14" height="15" viewBox="0 0 14 15" fill="none" stroke="#bebebe" stroke-width="1" stroke-linejoin="round"><path d="M7 0.8 L13 4 V11 L7 14.2 L1 11 V4 Z"/><path d="M1 4 L7 7.2 L13 4 M7 7.2 V14.2"/></svg>
<div class="t pre" style="left:997px;top:401px;font-size:12.8px">Bolts</div>
<svg style="left:968px;top:421px" width="7" height="8" viewBox="0 0 7 8"><path d="M0 0 L7 4 L0 8Z" fill="#7d7d7d"/></svg>
<svg style="left:980px;top:417px" width="14" height="15" viewBox="0 0 14 15" fill="none" stroke="#bebebe" stroke-width="1" stroke-linejoin="round"><path d="M7 0.8 L13 4 V11 L7 14.2 L1 11 V4 Z"/><path d="M1 4 L7 7.2 L13 4 M7 7.2 V14.2"/></svg>
<div class="t pre" style="left:997px;top:417px;font-size:12.8px">Grid</div>
<svg style="left:968px;top:437px" width="7" height="8" viewBox="0 0 7 8"><path d="M0 0 L7 4 L0 8Z" fill="#7d7d7d"/></svg>
<svg style="left:980px;top:433px" width="14" height="15" viewBox="0 0 14 15" fill="none" stroke="#bebebe" stroke-width="1" stroke-linejoin="round"><path d="M7 0.8 L13 4 V11 L7 14.2 L1 11 V4 Z"/><path d="M1 4 L7 7.2 L13 4 M7 7.2 V14.2"/></svg>
<div class="t pre" style="left:997px;top:433px;font-size:12.8px">Flaps</div>
<svg style="left:968px;top:453px" width="7" height="8" viewBox="0 0 7 8"><path d="M0 0 L7 4 L0 8Z" fill="#7d7d7d"/></svg>
<svg style="left:980px;top:449px" width="14" height="15" viewBox="0 0 14 15" fill="none" stroke="#bebebe" stroke-width="1" stroke-linejoin="round"><path d="M7 0.8 L13 4 V11 L7 14.2 L1 11 V4 Z"/><path d="M1 4 L7 7.2 L13 4 M7 7.2 V14.2"/></svg>
<div class="t pre" style="left:997px;top:449px;font-size:12.8px">Plates</div>
<svg style="left:968px;top:469px" width="7" height="8" viewBox="0 0 7 8"><path d="M0 0 L7 4 L0 8Z" fill="#7d7d7d"/></svg>
<svg style="left:980px;top:465px" width="14" height="15" viewBox="0 0 14 15" fill="none" stroke="#bebebe" stroke-width="1" stroke-linejoin="round"><path d="M7 0.8 L13 4 V11 L7 14.2 L1 11 V4 Z"/><path d="M1 4 L7 7.2 L13 4 M7 7.2 V14.2"/></svg>
<div class="t pre" style="left:997px;top:465px;font-size:12.8px">Clamps</div>
<svg style="left:925px;top:486px" width="9" height="7" viewBox="0 0 9 7"><path d="M0 0 H9 L4.5 7Z" fill="#7d7d7d"/></svg>
<svg style="left:938px;top:481px" width="14" height="15" viewBox="0 0 14 15" fill="none" stroke="#bebebe" stroke-width="1" stroke-linejoin="round"><path d="M7 0.8 L13 4 V11 L7 14.2 L1 11 V4 Z"/><path d="M1 4 L7 7.2 L13 4 M7 7.2 V14.2"/></svg>
<div class="t" style="left:955px;top:481px;font-size:12.8px">Canvas</div>
<svg style="left:940px;top:501px" width="7" height="8" viewBox="0 0 7 8"><path d="M0 0 L7 4 L0 8Z" fill="#7d7d7d"/></svg>
<svg style="left:952px;top:497px" width="14" height="15" viewBox="0 0 14 15" fill="none" stroke="#bebebe" stroke-width="1" stroke-linejoin="round"><path d="M7 0.8 L13 4 V11 L7 14.2 L1 11 V4 Z"/><path d="M1 4 L7 7.2 L13 4 M7 7.2 V14.2"/></svg>
<div class="t" style="left:969px;top:497px;font-size:12.8px">Hull</div>
<svg style="left:940px;top:517px" width="7" height="8" viewBox="0 0 7 8"><path d="M0 0 L7 4 L0 8Z" fill="#7d7d7d"/></svg>
<svg style="left:952px;top:513px" width="14" height="15" viewBox="0 0 14 15" fill="none" stroke="#bebebe" stroke-width="1" stroke-linejoin="round"><path d="M7 0.8 L13 4 V11 L7 14.2 L1 11 V4 Z"/><path d="M1 4 L7 7.2 L13 4 M7 7.2 V14.2"/></svg>
<div class="t" style="left:969px;top:513px;font-size:12.8px">Tubes</div>
<svg style="left:940px;top:533px" width="7" height="8" viewBox="0 0 7 8"><path d="M0 0 L7 4 L0 8Z" fill="#7d7d7d"/></svg>
<svg style="left:952px;top:529px" width="14" height="15" viewBox="0 0 14 15" fill="none" stroke="#bebebe" stroke-width="1" stroke-linejoin="round"><path d="M7 0.8 L13 4 V11 L7 14.2 L1 11 V4 Z"/><path d="M1 4 L7 7.2 L13 4 M7 7.2 V14.2"/></svg>
<div class="t" style="left:969px;top:529px;font-size:12.8px">Grid</div>
<svg style="left:939px;top:550px" width="9" height="7" viewBox="0 0 9 7"><path d="M0 0 H9 L4.5 7Z" fill="#7d7d7d"/></svg>
<svg style="left:952px;top:545px" width="14" height="15" viewBox="0 0 14 15" fill="none" stroke="#bebebe" stroke-width="1" stroke-linejoin="round"><path d="M7 0.8 L13 4 V11 L7 14.2 L1 11 V4 Z"/><path d="M1 4 L7 7.2 L13 4 M7 7.2 V14.2"/></svg>
<div class="t" style="left:969px;top:545px;font-size:12.8px">Pistons</div>
<svg style="left:966px;top:561px" width="14" height="15" viewBox="0 0 14 15" fill="none" stroke="#bebebe" stroke-width="1" stroke-linejoin="round"><path d="M7 0.8 L13 4 V11 L7 14.2 L1 11 V4 Z"/><path d="M1 4 L7 7.2 L13 4 M7 7.2 V14.2"/></svg>
<div class="t" style="left:983px;top:561px;font-size:12.8px">Text (TMP)</div>
<svg style="left:938px;top:577px" width="14" height="15" viewBox="0 0 14 15" fill="none" stroke="#bebebe" stroke-width="1" stroke-linejoin="round"><path d="M7 0.8 L13 4 V11 L7 14.2 L1 11 V4 Z"/><path d="M1 4 L7 7.2 L13 4 M7 7.2 V14.2"/></svg>
<div class="t" style="left:955px;top:577px;font-size:12.8px">EventSystem</div>
<svg style="left:1476px;top:196px" width="6" height="10" viewBox="0 0 6 10" fill="none" stroke="#9a9a9a" stroke-width="1.3"><path d="M1 1 L5 5 L1 9"/></svg>
<!-- Project panel -->
<div class="a" style="left:875px;top:634px;width:613px;height:20px;background:#282828"></div>
<div class="a" style="left:875px;top:634px;width:81px;height:20px;background:#3c3c3c;border-radius:3px 3px 0 0"></div>
<svg style="left:883px;top:639px" width="12.3" height="11" viewBox="0 0 13 11" preserveAspectRatio="none"><path d="M0 1 Q0 0 1 0 H4.5 L6 1.6 H12 Q13 1.6 13 2.6 V10 Q13 11 12 11 H1 Q0 11 0 10Z" fill="#c8c8c8"/></svg>
<div class="t" style="left:899px;top:636.6px;font-size:12.6px">Project</div>
<svg style="left:1452.5px;top:638px" width="9" height="11" viewBox="0 0 9 11" fill="none" stroke="#c8c8c8" stroke-width="1.2"><rect x="0.6" y="5.8" width="7.8" height="4.4"/><path d="M1.6 3.6 V3.2 A2.6 2.6 0 0 1 6.8 3.2 V5.8"/></svg>
<svg style="left:1473px;top:639px" width="3" height="11" viewBox="0 0 3 11" fill="#c4c4c4"><rect x="0.4" y="0" width="2.2" height="2.2"/><rect x="0.4" y="4.1" width="2.2" height="2.2"/><rect x="0.4" y="8.2" width="2.2" height="2.2"/></svg>
<div class="a" style="left:875px;top:653px;width:613px;height:21px;background:#3c3c3c"></div>
<div class="a" style="left:875px;top:673px;width:613px;height:1px;background:#252525"></div>
<svg style="left:882px;top:657px" width="12" height="12" viewBox="0 0 12 12" stroke="#d0d0d0" stroke-width="1.6"><path d="M6 0 V12 M0 6 H12"/></svg>
<svg style="left:898px;top:661px" width="8" height="5" viewBox="0 0 8 5"><path d="M0 0 H8 L4 4.5 Z" fill="#c4c4c4"/></svg>
<div class="a" style="left:1022px;top:655px;width:318px;height:16px;background:#2a2a2a;border:1px solid #1e1e1e;border-radius:8px 3px 3px 8px"></div>
<div class="a" style="left:1322px;top:656px;width:17px;height:14px;background:#3c3c3c;border-radius:0 2px 2px 0"></div>
<svg style="left:1027px;top:659px" width="9" height="9" viewBox="0 0 9 9" fill="none" stroke="#c4c4c4" stroke-width="1.2"><circle cx="3.4" cy="3.4" r="2.5"/><path d="M5.3 5.3 L8.3 8.3" stroke-width="1.5"/></svg>
<svg style="left:1325px;top:657px" width="12" height="12" viewBox="0 0 12 12" fill="none" stroke="#c4c4c4" stroke-width="1.1"><path d="M3 0.6 H11.4 V9 H3 Z"/><rect x="0.6" y="7" width="4.4" height="4.4" fill="#3c3c3c"/><path d="M5.5 6.5 L9.2 2.8 M6.4 2.6 H9.4 V5.6"/></svg>
<div class="a" style="left:1342px;top:653px;width:1px;height:20px;background:#2c2c2c"></div>
<div class="a" style="left:1368px;top:653px;width:1px;height:20px;background:#2c2c2c"></div>
<div class="a" style="left:1394px;top:653px;width:1px;height:20px;background:#2c2c2c"></div>
<div class="a" style="left:1420px;top:653px;width:1px;height:20px;background:#2c2c2c"></div>
<div class="a" style="left:1446px;top:653px;width:1px;height:20px;background:#2c2c2c"></div>
<svg style="left:1348px;top:656px" width="14" height="14" viewBox="0 0 14 14" fill="#c4c4c4"><rect x="2.5" y="0.5" width="5" height="5"/><circle cx="4" cy="10" r="3.6"/><path d="M10 4 L13.6 10.5 H7.5Z"/></svg>
<svg style="left:1374px;top:657px" width="13" height="12" viewBox="0 0 13 12" fill="#c4c4c4"><path d="M5.5 1.5 L11 0.5 Q12.5 0.3 12.5 2 V5 L6.5 11 Q5.5 11.8 4.7 11 L0.8 7 Q0 6.2 0.8 5.4Z"/><circle cx="10" cy="3" r="1" fill="#3c3c3c"/></svg>
<svg style="left:1400px;top:656px" width="14" height="14" viewBox="0 0 14 14"><circle cx="7" cy="7" r="7" fill="#dcdcdc"/><path d="M7 2.6 V8.200000000000001" stroke="#3c3c3c" stroke-width="1.8"/><circle cx="7" cy="10.8" r="1.1" fill="#3c3c3c"/></svg>
<svg style="left:1427px;top:657px" width="13" height="12" viewBox="0 0 13 12"><path d="M6.5 0 L8.3 4.2 L13 4.6 L9.4 7.6 L10.5 12 L6.5 9.6 L2.5 12 L3.6 7.6 L0 4.6 L4.7 4.2Z" fill="#8e8e8e"/></svg>
<svg style="left:1452px;top:657px" width="16" height="12" viewBox="0 0 16 12" fill="none" stroke="#c4c4c4" stroke-width="1.1"><path d="M1 6 C3 2.7 5.5 2 8 2 S13 2.7 15 6 C13 9.3 10.5 10 8 10 S3 9.3 1 6Z"/><circle cx="8" cy="6" r="1.8"/><path d="M2.5 11.5 L13.5 0.5" stroke-width="1.2"/></svg>
<div class="t" style="left:1469px;top:655px;font-size:13px">20</div>
<div class="a" style="left:875px;top:674px;width:282px;height:344px;background:#383838"></div>
<div class="a" style="left:1157px;top:674px;width:14px;height:344px;background:#353535"></div>
<div class="a" style="left:1159px;top:732px;width:10px;height:202px;background:#5f5f5f;border-radius:5px"></div>
<svg style="left:1160px;top:679px" width="8" height="5" viewBox="0 0 8 5"><path d="M0 5 H8 L4 0.5 Z" fill="#d8d8d8"/></svg>
<svg style="left:1160px;top:1008px" width="8" height="5" viewBox="0 0 8 5"><path d="M0 0 H8 L4 4.5 Z" fill="#d8d8d8"/></svg>
<div class="a" style="left:875px;top:754px;width:282px;height:16px;background:#4d4d4d"></div>
<div class="a" style="left:876px;top:674px;width:281px;height:344px;overflow:hidden">
<svg style="left:3px;top:5px" width="9" height="7" viewBox="0 0 9 7"><path d="M0 0 H9 L4.5 7Z" fill="#7d7d7d"/></svg>
<svg style="left:17px;top:3px" width="14" height="11" viewBox="0 0 15 11" preserveAspectRatio="none"><path d="M0.6 10 V1 Q0.6 0.6 1 0.6 H4.3 L5.8 2.2 H11.5 V4" fill="none" stroke="#c8c8c8" stroke-width="1.2"/><path d="M3 4 H15 L12.3 11 H0.5Z" fill="#c8c8c8"/></svg>
<div class="t b" style="left:33px;top:0px;font-size:13.4px;color:#d0d0d0">Assets</div>
<svg style="left:18px;top:20px" width="7" height="8" viewBox="0 0 7 8"><path d="M0 0 L7 4 L0 8Z" fill="#7d7d7d"/></svg>
<svg style="left:31px;top:19px" width="12.3" height="11" viewBox="0 0 13 11" preserveAspectRatio="none"><path d="M0 1 Q0 0 1 0 H4.5 L6 1.6 H12 Q13 1.6 13 2.6 V10 Q13 11 12 11 H1 Q0 11 0 10Z" fill="#c8c8c8"/></svg>
<div class="t" style="left:47px;top:16px;font-size:12.6px;letter-spacing:0px">Assets</div>
<svg style="left:31px;top:35px" width="13" height="11" viewBox="0 0 13 11"><path d="M0.6 1 Q0.6 0.6 1 0.6 H4.3 L5.8 2.2 H12 Q12.4 2.2 12.4 2.6 V10 Q12.4 10.4 12 10.4 H1 Q0.6 10.4 0.6 10Z" fill="none" stroke="#c8c8c8" stroke-width="1.2"/></svg>
<div class="t" style="left:47px;top:32px;font-size:12.6px;letter-spacing:0px">Materials</div>
<svg style="left:31px;top:51px" width="13" height="11" viewBox="0 0 13 11"><path d="M0.6 1 Q0.6 0.6 1 0.6 H4.3 L5.8 2.2 H12 Q12.4 2.2 12.4 2.6 V10 Q12.4 10.4 12 10.4 H1 Q0.6 10.4 0.6 10Z" fill="none" stroke="#c8c8c8" stroke-width="1.2"/></svg>
<div class="t" style="left:47px;top:48px;font-size:12.6px;letter-spacing:0px">Prefabs</div>
<svg style="left:31px;top:67px" width="12.3" height="11" viewBox="0 0 13 11" preserveAspectRatio="none"><path d="M0 1 Q0 0 1 0 H4.5 L6 1.6 H12 Q13 1.6 13 2.6 V10 Q13 11 12 11 H1 Q0 11 0 10Z" fill="#c8c8c8"/></svg>
<div class="t" style="left:47px;top:64px;font-size:12.6px;letter-spacing:0px">Scenes</div>
<svg style="left:31px;top:83px" width="12.3" height="11" viewBox="0 0 13 11" preserveAspectRatio="none"><path d="M0 1 Q0 0 1 0 H4.5 L6 1.6 H12 Q13 1.6 13 2.6 V10 Q13 11 12 11 H1 Q0 11 0 10Z" fill="#c8c8c8"/></svg>
<div class="t" style="left:47px;top:80px;font-size:12.6px;letter-spacing:0px">Scripts</div>
<svg style="left:18px;top:100px" width="7" height="8" viewBox="0 0 7 8"><path d="M0 0 L7 4 L0 8Z" fill="#7d7d7d"/></svg>
<svg style="left:31px;top:99px" width="12.3" height="11" viewBox="0 0 13 11" preserveAspectRatio="none"><path d="M0 1 Q0 0 1 0 H4.5 L6 1.6 H12 Q13 1.6 13 2.6 V10 Q13 11 12 11 H1 Q0 11 0 10Z" fill="#c8c8c8"/></svg>
<div class="t" style="left:47px;top:96px;font-size:12.6px;letter-spacing:0px">TextMesh Pro</div>
<svg style="left:18px;top:116px" width="7" height="8" viewBox="0 0 7 8"><path d="M0 0 L7 4 L0 8Z" fill="#7d7d7d"/></svg>
<svg style="left:31px;top:115px" width="12.3" height="11" viewBox="0 0 13 11" preserveAspectRatio="none"><path d="M0 1 Q0 0 1 0 H4.5 L6 1.6 H12 Q13 1.6 13 2.6 V10 Q13 11 12 11 H1 Q0 11 0 10Z" fill="#c8c8c8"/></svg>
<div class="t" style="left:47px;top:112px;font-size:12.6px;letter-spacing:0px">XR</div>
<svg style="left:3px;top:133px" width="9" height="7" viewBox="0 0 9 7"><path d="M0 0 H9 L4.5 7Z" fill="#7d7d7d"/></svg>
<svg style="left:17px;top:131px" width="14" height="11" viewBox="0 0 15 11" preserveAspectRatio="none"><path d="M0.6 10 V1 Q0.6 0.6 1 0.6 H4.3 L5.8 2.2 H11.5 V4" fill="none" stroke="#c8c8c8" stroke-width="1.2"/><path d="M3 4 H15 L12.3 11 H0.5Z" fill="#c8c8c8"/></svg>
<div class="t b" style="left:33px;top:128px;font-size:13.4px;color:#d0d0d0">Packages</div>
<svg style="left:18px;top:148px" width="7" height="8" viewBox="0 0 7 8"><path d="M0 0 L7 4 L0 8Z" fill="#7d7d7d"/></svg>
<svg style="left:31px;top:147px" width="12.3" height="11" viewBox="0 0 13 11" preserveAspectRatio="none"><path d="M0 1 Q0 0 1 0 H4.5 L6 1.6 H12 Q13 1.6 13 2.6 V10 Q13 11 12 11 H1 Q0 11 0 10Z" fill="#c8c8c8"/></svg>
<div class="t" style="left:47px;top:144px;font-size:12.6px;letter-spacing:0px">AR Foundation</div>
<svg style="left:18px;top:164px" width="7" height="8" viewBox="0 0 7 8"><path d="M0 0 L7 4 L0 8Z" fill="#7d7d7d"/></svg>
<svg style="left:31px;top:163px" width="12.3" height="11" viewBox="0 0 13 11" preserveAspectRatio="none"><path d="M0 1 Q0 0 1 0 H4.5 L6 1.6 H12 Q13 1.6 13 2.6 V10 Q13 11 12 11 H1 Q0 11 0 10Z" fill="#c8c8c8"/></svg>
<div class="t" style="left:47px;top:160px;font-size:12.6px;letter-spacing:0px">Code Coverage</div>
<svg style="left:18px;top:180px" width="7" height="8" viewBox="0 0 7 8"><path d="M0 0 L7 4 L0 8Z" fill="#7d7d7d"/></svg>
<svg style="left:31px;top:179px" width="12.3" height="11" viewBox="0 0 13 11" preserveAspectRatio="none"><path d="M0 1 Q0 0 1 0 H4.5 L6 1.6 H12 Q13 1.6 13 2.6 V10 Q13 11 12 11 H1 Q0 11 0 10Z" fill="#c8c8c8"/></svg>
<div class="t" style="left:47px;top:176px;font-size:12.6px;letter-spacing:0px">Custom NUnit</div>
<svg style="left:18px;top:196px" width="7" height="8" viewBox="0 0 7 8"><path d="M0 0 L7 4 L0 8Z" fill="#7d7d7d"/></svg>
<svg style="left:31px;top:195px" width="12.3" height="11" viewBox="0 0 13 11" preserveAspectRatio="none"><path d="M0 1 Q0 0 1 0 H4.5 L6 1.6 H12 Q13 1.6 13 2.6 V10 Q13 11 12 11 H1 Q0 11 0 10Z" fill="#c8c8c8"/></svg>
<div class="t" style="left:47px;top:192px;font-size:12.6px;letter-spacing:0px">Editor Coroutines</div>
<svg style="left:18px;top:212px" width="7" height="8" viewBox="0 0 7 8"><path d="M0 0 L7 4 L0 8Z" fill="#7d7d7d"/></svg>
<svg style="left:31px;top:211px" width="12.3" height="11" viewBox="0 0 13 11" preserveAspectRatio="none"><path d="M0 1 Q0 0 1 0 H4.5 L6 1.6 H12 Q13 1.6 13 2.6 V10 Q13 11 12 11 H1 Q0 11 0 10Z" fill="#c8c8c8"/></svg>
<div class="t" style="left:47px;top:208px;font-size:12.6px;letter-spacing:-0.22px">Google ARCore XR Plugin</div>
<svg style="left:18px;top:228px" width="7" height="8" viewBox="0 0 7 8"><path d="M0 0 L7 4 L0 8Z" fill="#7d7d7d"/></svg>
<svg style="left:31px;top:227px" width="12.3" height="11" viewBox="0 0 13 11" preserveAspectRatio="none"><path d="M0 1 Q0 0 1 0 H4.5 L6 1.6 H12 Q13 1.6 13 2.6 V10 Q13 11 12 11 H1 Q0 11 0 10Z" fill="#c8c8c8"/></svg>
<div class="t" style="left:47px;top:224px;font-size:12.6px;letter-spacing:0px">Input System</div>
<svg style="left:18px;top:244px" width="7" height="8" viewBox="0 0 7 8"><path d="M0 0 L7 4 L0 8Z" fill="#7d7d7d"/></svg>
<svg style="left:31px;top:243px" width="12.3" height="11" viewBox="0 0 13 11" preserveAspectRatio="none"><path d="M0 1 Q0 0 1 0 H4.5 L6 1.6 H12 Q13 1.6 13 2.6 V10 Q13 11 12 11 H1 Q0 11 0 10Z" fill="#c8c8c8"/></svg>
<div class="t" style="left:47px;top:240px;font-size:12.6px;letter-spacing:0px">JetBrains Rider Editor</div>
<svg style="left:18px;top:260px" width="7" height="8" viewBox="0 0 7 8"><path d="M0 0 L7 4 L0 8Z" fill="#7d7d7d"/></svg>
<svg style="left:31px;top:259px" width="12.3" height="11" viewBox="0 0 13 11" preserveAspectRatio="none"><path d="M0 1 Q0 0 1 0 H4.5 L6 1.6 H12 Q13 1.6 13 2.6 V10 Q13 11 12 11 H1 Q0 11 0 10Z" fill="#c8c8c8"/></svg>
<div class="t" style="left:47px;top:256px;font-size:12.6px;letter-spacing:0px">Mathematics</div>
<svg style="left:18px;top:276px" width="7" height="8" viewBox="0 0 7 8"><path d="M0 0 L7 4 L0 8Z" fill="#7d7d7d"/></svg>
<svg style="left:31px;top:275px" width="12.3" height="11" viewBox="0 0 13 11" preserveAspectRatio="none"><path d="M0 1 Q0 0 1 0 H4.5 L6 1.6 H12 Q13 1.6 13 2.6 V10 Q13 11 12 11 H1 Q0 11 0 10Z" fill="#c8c8c8"/></svg>
<div class="t" style="left:47px;top:272px;font-size:12.6px;letter-spacing:0px">Profile Analyzer</div>
<svg style="left:18px;top:292px" width="7" height="8" viewBox="0 0 7 8"><path d="M0 0 L7 4 L0 8Z" fill="#7d7d7d"/></svg>
<svg style="left:31px;top:291px" width="12.3" height="11" viewBox="0 0 13 11" preserveAspectRatio="none"><path d="M0 1 Q0 0 1 0 H4.5 L6 1.6 H12 Q13 1.6 13 2.6 V10 Q13 11 12 11 H1 Q0 11 0 10Z" fill="#c8c8c8"/></svg>
<div class="t" style="left:47px;top:288px;font-size:12.6px;letter-spacing:0px">Settings Manager</div>
<svg style="left:18px;top:308px" width="7" height="8" viewBox="0 0 7 8"><path d="M0 0 L7 4 L0 8Z" fill="#7d7d7d"/></svg>
<svg style="left:31px;top:307px" width="12.3" height="11" viewBox="0 0 13 11" preserveAspectRatio="none"><path d="M0 1 Q0 0 1 0 H4.5 L6 1.6 H12 Q13 1.6 13 2.6 V10 Q13 11 12 11 H1 Q0 11 0 10Z" fill="#c8c8c8"/></svg>
<div class="t" style="left:47px;top:304px;font-size:12.6px;letter-spacing:0px">Test Framework</div>
<svg style="left:18px;top:324px" width="7" height="8" viewBox="0 0 7 8"><path d="M0 0 L7 4 L0 8Z" fill="#7d7d7d"/></svg>
<svg style="left:31px;top:323px" width="12.3" height="11" viewBox="0 0 13 11" preserveAspectRatio="none"><path d="M0 1 Q0 0 1 0 H4.5 L6 1.6 H12 Q13 1.6 13 2.6 V10 Q13 11 12 11 H1 Q0 11 0 10Z" fill="#c8c8c8"/></svg>
<div class="t" style="left:47px;top:320px;font-size:12.6px;letter-spacing:0px">TextMeshPro</div>
<svg style="left:18px;top:340px" width="7" height="8" viewBox="0 0 7 8"><path d="M0 0 L7 4 L0 8Z" fill="#7d7d7d"/></svg>
<svg style="left:31px;top:339px" width="12.3" height="11" viewBox="0 0 13 11" preserveAspectRatio="none"><path d="M0 1 Q0 0 1 0 H4.5 L6 1.6 H12 Q13 1.6 13 2.6 V10 Q13 11 12 11 H1 Q0 11 0 10Z" fill="#c8c8c8"/></svg>
<div class="t" style="left:47px;top:336px;font-size:12.6px;letter-spacing:0px">Timeline</div>
</div>
<div class="a" style="left:1171px;top:674px;width:317px;height:344px;background:#333"></div>
<div class="a" style="left:1171px;top:674px;width:317px;height:21px;background:#3e3e3e"></div>
<div class="t" style="left:1175px;top:676px;font-size:13px;color:#b0b0b0">Assets</div>
<svg style="left:1220px;top:680px" width="6" height="9" viewBox="0 0 6 9" fill="none" stroke="#a0a0a0" stroke-width="1.2"><path d="M1 0.5 L5 4.5 L1 8.5"/></svg>
<div class="t b" style="left:1232px;top:676px;font-size:13px;color:#d0d0d0">Scripts</div>
<svg style="left:1189px;top:696px" width="12" height="14" viewBox="0 0 12 14"><path d="M0.5 0 H8.5 L12 3.500000000000001 V13.5 Q12 14 11.5 14 H0.5 Q0 14 0 13.5 V0.5 Q0 0 0.5 0Z" fill="#f1f1f1"/><path d="M4.6 4 L3.8 11 M7.8 4 L7 11 M2.4 6.2 H9.6 M2 8.8 H9.2" stroke="#2e7d32" stroke-width="1.2" fill="none"/></svg>
<div class="t" style="left:1205px;top:695px;font-size:13px;letter-spacing:0.63px">MeshToggler</div>
<svg style="left:1189px;top:712px" width="12" height="14" viewBox="0 0 12 14"><path d="M0.5 0 H8.5 L12 3.500000000000001 V13.5 Q12 14 11.5 14 H0.5 Q0 14 0 13.5 V0.5 Q0 0 0.5 0Z" fill="#f1f1f1"/><path d="M4.6 4 L3.8 11 M7.8 4 L7 11 M2.4 6.2 H9.6 M2 8.8 H9.2" stroke="#2e7d32" stroke-width="1.2" fill="none"/></svg>
<div class="t" style="left:1205px;top:711px;font-size:13px;letter-spacing:0.38px">RotationController</div>
<div class="a" style="left:1171px;top:997px;width:317px;height:21px;background:#3c3c3c"></div>
<div class="a" style="left:1422px;top:1007px;width:50px;height:2px;background:#5e5e5e"></div>
<div class="a" style="left:1417px;top:1003px;width:10px;height:10px;border-radius:5px;background:#999"></div>
<!-- Inspector -->
<div class="a" style="left:1490px;top:73px;width:430px;height:19px;background:#282828"></div>
<div class="a" style="left:1490px;top:73px;width:95px;height:20px;background:#3c3c3c;border-radius:3px 3px 0 0"></div>
<div class="a" style="left:1490px;top:73px;width:95px;height:2px;background:#3a79bb;border-radius:3px 3px 0 0"></div>
<svg style="left:1499px;top:78px" width="10" height="10" viewBox="0 0 10 10"><circle cx="5" cy="5" r="5" fill="#d8d8d8"/><rect x="4.2" y="4.2" width="1.6" height="3.8" fill="#3c3c3c"/><rect x="4.2" y="1.9" width="1.6" height="1.6" fill="#3c3c3c"/></svg>
<div class="t" style="left:1514px;top:75.6px;font-size:12.6px">Inspector</div>
<svg style="left:1884.5px;top:77px" width="9" height="11" viewBox="0 0 9 11" fill="none" stroke="#c8c8c8" stroke-width="1.2"><rect x="0.6" y="5.8" width="7.8" height="4.4"/><path d="M1.6 3.6 V3.2 A2.6 2.6 0 0 1 6.8 3.2 V5.8"/></svg>
<svg style="left:1905px;top:78px" width="3" height="11" viewBox="0 0 3 11" fill="#c4c4c4"><rect x="0.4" y="0" width="2.2" height="2.2"/><rect x="0.4" y="4.1" width="2.2" height="2.2"/><rect x="0.4" y="8.2" width="2.2" height="2.2"/></svg>
<div class="a" style="left:1490px;top:92px;width:430px;height:926px;background:#383838"></div>
<div class="a" style="left:1490px;top:92px;width:417px;height:5px;background:#3e3e3e"></div>
<div class="a" style="left:1490px;top:97px;width:417px;height:1px;background:#303030"></div>
<div class="a" style="left:1514px;top:93px;width:6px;height:1px;background:#c4c4c4"></div>
<div class="a" style="left:1907px;top:92px;width:13px;height:745px;background:#3a3a3a"></div>
<div class="a" style="left:1909px;top:319px;width:10px;height:495px;background:#5f5f5f;border-radius:5px"></div>
<svg style="left:1910px;top:98px" width="8" height="5" viewBox="0 0 8 5"><path d="M0 5 H8 L4 0.5 Z" fill="#d8d8d8"/></svg>
<svg style="left:1910px;top:826px" width="8" height="5" viewBox="0 0 8 5"><path d="M0 0 H8 L4 4.5 Z" fill="#d8d8d8"/></svg>
<div class="t" style="left:1509px;top:103.5px;font-size:12.7px;letter-spacing:0.05px;color:#c4c4c4;">Cull Transparent Mesh</div>
<div class="cb" style="left:1658px;top:104px"></div>
<svg style="left:1660px;top:107px" width="10" height="8" viewBox="0 0 10 8" fill="none" stroke="#e0e0e0" stroke-width="1.6"><path d="M1 4 L3.800000000000001 6.8 L9 1"/></svg>
<div class="a" style="left:1490px;top:129px;width:417px;height:1px;background:#1f1f1f"></div>
<div class="a" style="left:1490px;top:130px;width:417px;height:20px;background:#3e3e3e"></div>
<div class="a" style="left:1490px;top:150px;width:417px;height:1px;background:#323232"></div>
<svg style="left:1496px;top:137px" width="9" height="7" viewBox="0 0 9 7"><path d="M0 0 H9 L4.5 7Z" fill="#7d7d7d"/></svg>
<svg style="left:1511px;top:133px" width="14" height="14" viewBox="0 0 14 14" fill="none" stroke="#d0d0d0" stroke-width="1"><rect x="1.5" y="2" width="11" height="10"/><rect x="0" y="0.5" width="3" height="3" fill="#d0d0d0" stroke="none"/><rect x="11" y="0.5" width="3" height="3" fill="#d0d0d0" stroke="none"/><rect x="0" y="10.5" width="3" height="3" fill="#d0d0d0" stroke="none"/><rect x="11" y="10.5" width="3" height="3" fill="#d0d0d0" stroke="none"/><path d="M3 10.5 L5.5 7.5 L7.5 9.5 L9.5 7 L11.5 10.5Z" fill="#d0d0d0" stroke="none"/><circle cx="5" cy="5.2" r="1" fill="#d0d0d0" stroke="none"/></svg>
<div class="cb" style="left:1530px;top:133px"></div>
<svg style="left:1532px;top:136px" width="10" height="8" viewBox="0 0 10 8" fill="none" stroke="#e0e0e0" stroke-width="1.6"><path d="M1 4 L3.800000000000001 6.8 L9 1"/></svg>
<div class="t b" style="left:1550px;top:132px;font-size:13px;color:#d6d6d6">Image</div>
<svg style="left:1849px;top:135px" width="10" height="10" viewBox="0 0 10 10"><circle cx="5" cy="5" r="5" fill="#d0d0d0"/><path d="M3.4 3.8 A1.7 1.7 0 1 1 5.6 5.4 Q5 5.7 5 6.4" fill="none" stroke="#3e3e3e" stroke-width="1.3"/><rect x="4.3" y="7.2" width="1.4" height="1.4" fill="#3e3e3e"/></svg>
<svg style="left:1868px;top:135px" width="11" height="10" viewBox="0 0 11 10" fill="none" stroke="#d0d0d0" stroke-width="1.2"><path d="M0 2.5 H6 M8.5 2.5 H11 M7 0.3 V4.7 M0 7.5 H2.5 M5 7.5 H11 M3.8 5.3 V9.7"/></svg>
<svg style="left:1893px;top:135px" width="3" height="11" viewBox="0 0 3 11" fill="#c4c4c4"><rect x="0.4" y="0" width="2.2" height="2.2"/><rect x="0.4" y="4.1" width="2.2" height="2.2"/><rect x="0.4" y="8.2" width="2.2" height="2.2"/></svg>
<div class="t" style="left:1509px;top:156.5px;font-size:12.7px;letter-spacing:0px;color:#c4c4c4;">Source Image</div>
<div class="fld" style="left:1658px;top:155px;width:245px"></div>
<div class="a" style="left:1884px;top:156px;width:18px;height:16px;background:#373737;border-radius:0 2px 2px 0"></div>
<svg style="left:1888px;top:159px" width="10" height="10" viewBox="0 0 10 10" fill="none" stroke="#c4c4c4" stroke-width="1"><circle cx="5" cy="5" r="4.4"/><circle cx="5" cy="5" r="1.6" fill="#c4c4c4" stroke="none"/></svg>
<div class="t" style="left:1674px;top:156.5px;font-size:12.7px;letter-spacing:0px;color:#c4c4c4;">UISprite</div>
<svg style="left:1662px;top:158px" width="11" height="11" viewBox="0 0 11 11" fill="none" stroke="#9a7fd0" stroke-width="1" stroke-dasharray="3 2.5"><rect x="0.5" y="0.5" width="10" height="10"/><rect x="3.5" y="3.5" width="4" height="4" fill="#e0e0e0" stroke="none"/></svg>
<div class="t" style="left:1509px;top:176.5px;font-size:12.7px;letter-spacing:0px;color:#c4c4c4;">Color</div>
<div class="a" style="left:1659px;top:176px;width:225px;height:16px;background:#fff"></div>
<div class="a" style="left:1884px;top:175px;width:19px;height:18px;background:#3a3a3a;border:1px solid #262626;border-radius:0 3px 3px 0"></div>
<svg style="left:1888px;top:178px" width="12" height="12" viewBox="0 0 12 12"><path d="M7.5 1.2 Q9.5 -0.5 11 1 T10.8 4.5 L9.8 5.5 L10.5 6.2 L9.6 7.1 L4.9 2.4 L5.8 1.5 L6.5 2.2Z" fill="#c4c4c4"/><path d="M6 4.2 L7.8 6 L3.2 10.6 L1 11.3 L0.7 11 L1.4 8.8Z" fill="#c4c4c4"/></svg>
<div class="t" style="left:1509px;top:196.5px;font-size:12.7px;letter-spacing:0px;color:#c4c4c4;">Material</div>
<div class="fld" style="left:1658px;top:195px;width:245px"></div>
<div class="a" style="left:1884px;top:196px;width:18px;height:16px;background:#373737;border-radius:0 2px 2px 0"></div>
<svg style="left:1888px;top:199px" width="10" height="10" viewBox="0 0 10 10" fill="none" stroke="#c4c4c4" stroke-width="1"><circle cx="5" cy="5" r="4.4"/><circle cx="5" cy="5" r="1.6" fill="#c4c4c4" stroke="none"/></svg>
<div class="t" style="left:1661px;top:196.5px;font-size:12.7px;letter-spacing:0px;color:#c4c4c4;">None (Material)</div>
<div class="t" style="left:1509px;top:216.5px;font-size:12.7px;letter-spacing:0px;color:#c4c4c4;">Raycast Target</div>
<div class="cb" style="left:1658px;top:217px"></div>
<svg style="left:1660px;top:220px" width="10" height="8" viewBox="0 0 10 8" fill="none" stroke="#e0e0e0" stroke-width="1.6"><path d="M1 4 L3.800000000000001 6.8 L9 1"/></svg>
<svg style="left:1498px;top:240px" width="7" height="8" viewBox="0 0 7 8"><path d="M0 0 L7 4 L0 8Z" fill="#7d7d7d"/></svg>
<div class="t" style="left:1509px;top:236.5px;font-size:12.7px;letter-spacing:0px;color:#c4c4c4;">Raycast Padding</div>
<div class="t" style="left:1509px;top:258.5px;font-size:12.7px;letter-spacing:0px;color:#c4c4c4;">Maskable</div>
<div class="cb" style="left:1658px;top:259px"></div>
<svg style="left:1660px;top:262px" width="10" height="8" viewBox="0 0 10 8" fill="none" stroke="#e0e0e0" stroke-width="1.6"><path d="M1 4 L3.800000000000001 6.8 L9 1"/></svg>
<div class="t" style="left:1512px;top:278.5px;font-size:12.7px;letter-spacing:0px;color:#c4c4c4;">Image Type</div>
<div class="dd" style="left:1661px;top:278px;width:239px;height:17px;background:#515151"></div>
<div class="t" style="left:1665px;top:278.5px;font-size:12.7px;letter-spacing:0px;color:#c4c4c4;">Sliced</div>
<svg style="left:1884px;top:284px" width="8" height="5" viewBox="0 0 8 5"><path d="M0 0 H8 L4 4.5 Z" fill="#c4c4c4"/></svg>
<div class="t" style="left:1527px;top:298.5px;font-size:12.7px;letter-spacing:0px;color:#c4c4c4;">Fill Center</div>
<div class="cb" style="left:1661px;top:299px"></div>
<svg style="left:1663px;top:302px" width="10" height="8" viewBox="0 0 10 8" fill="none" stroke="#e0e0e0" stroke-width="1.6"><path d="M1 4 L3.800000000000001 6.8 L9 1"/></svg>
<div class="a" style="left:1527px;top:318px;width:133px;height:16px;overflow:hidden"><div class="t" style="left:0;top:0;font-size:13px;letter-spacing:.1px">Pixels Per Unit Multiplier</div></div>
<div class="fld" style="left:1661px;top:317px;width:239px"></div>
<div class="t" style="left:1664px;top:318.5px;font-size:12.7px;letter-spacing:0px;color:#c4c4c4;">1</div>
<div class="a" style="left:1490px;top:344px;width:417px;height:1px;background:#1f1f1f"></div>
<div class="a" style="left:1490px;top:345px;width:417px;height:20px;background:#3e3e3e"></div>
<div class="a" style="left:1490px;top:365px;width:417px;height:1px;background:#323232"></div>
<svg style="left:1496px;top:352px" width="9" height="7" viewBox="0 0 9 7"><path d="M0 0 H9 L4.5 7Z" fill="#7d7d7d"/></svg>
<svg style="left:1512px;top:348px" width="13" height="13" viewBox="0 0 13 13"><circle cx="6.5" cy="6.5" r="6" fill="none" stroke="#d0d0d0" stroke-width="1"/><circle cx="6.5" cy="6.5" r="4.2" fill="#d0d0d0"/></svg>
<div class="cb" style="left:1530px;top:348px"></div>
<svg style="left:1532px;top:351px" width="10" height="8" viewBox="0 0 10 8" fill="none" stroke="#e0e0e0" stroke-width="1.6"><path d="M1 4 L3.800000000000001 6.8 L9 1"/></svg>
<div class="t b" style="left:1550px;top:347px;font-size:13px;color:#d6d6d6">Button</div>
<svg style="left:1849px;top:350px" width="10" height="10" viewBox="0 0 10 10"><circle cx="5" cy="5" r="5" fill="#d0d0d0"/><path d="M3.4 3.8 A1.7 1.7 0 1 1 5.6 5.4 Q5 5.7 5 6.4" fill="none" stroke="#3e3e3e" stroke-width="1.3"/><rect x="4.3" y="7.2" width="1.4" height="1.4" fill="#3e3e3e"/></svg>
<svg style="left:1868px;top:350px" width="11" height="10" viewBox="0 0 11 10" fill="none" stroke="#d0d0d0" stroke-width="1.2"><path d="M0 2.5 H6 M8.5 2.5 H11 M7 0.3 V4.7 M0 7.5 H2.5 M5 7.5 H11 M3.8 5.3 V9.7"/></svg>
<svg style="left:1893px;top:350px" width="3" height="11" viewBox="0 0 3 11" fill="#c4c4c4"><rect x="0.4" y="0" width="2.2" height="2.2"/><rect x="0.4" y="4.1" width="2.2" height="2.2"/><rect x="0.4" y="8.2" width="2.2" height="2.2"/></svg>
<div class="t" style="left:1509px;top:371.5px;font-size:12.7px;letter-spacing:0px;color:#c4c4c4;">Interactable</div>
<div class="cb" style="left:1658px;top:372px"></div>
<svg style="left:1660px;top:375px" width="10" height="8" viewBox="0 0 10 8" fill="none" stroke="#e0e0e0" stroke-width="1.6"><path d="M1 4 L3.800000000000001 6.8 L9 1"/></svg>
<div class="t" style="left:1509px;top:391.5px;font-size:12.7px;letter-spacing:0px;color:#c4c4c4;">Transition</div>
<div class="dd" style="left:1658px;top:391px;width:245px;height:17px;background:#515151"></div>
<div class="t" style="left:1662px;top:391.5px;font-size:12.7px;letter-spacing:0px;color:#c4c4c4;">Color Tint</div>
<svg style="left:1887px;top:397px" width="8" height="5" viewBox="0 0 8 5"><path d="M0 0 H8 L4 4.5 Z" fill="#c4c4c4"/></svg>
<div class="t" style="left:1524px;top:411.5px;font-size:12.7px;letter-spacing:0px;color:#c4c4c4;">Target Graphic</div>
<div class="fld" style="left:1658px;top:410px;width:245px"></div>
<div class="a" style="left:1884px;top:411px;width:18px;height:16px;background:#373737;border-radius:0 2px 2px 0"></div>
<svg style="left:1888px;top:414px" width="10" height="10" viewBox="0 0 10 10" fill="none" stroke="#c4c4c4" stroke-width="1"><circle cx="5" cy="5" r="4.4"/><circle cx="5" cy="5" r="1.6" fill="#c4c4c4" stroke="none"/></svg>
<div class="t" style="left:1674px;top:411.5px;font-size:12.7px;letter-spacing:0px;color:#c4c4c4;">Grid (Image)</div>
<svg style="left:1662px;top:414px" width="11" height="10" viewBox="0 0 11 10" fill="none" stroke="#c4c4c4" stroke-width="0.9"><rect x="1.2" y="1.2" width="8.6" height="7.6"/><rect x="0" y="0" width="2.4" height="2.4" fill="#c4c4c4" stroke="none"/><rect x="8.6" y="0" width="2.4" height="2.4" fill="#c4c4c4" stroke="none"/><rect x="0" y="7.6" width="2.4" height="2.4" fill="#c4c4c4" stroke="none"/><rect x="8.6" y="7.6" width="2.4" height="2.4" fill="#c4c4c4" stroke="none"/><path d="M2.5 7.5 L4.5 5.2 L6 6.6 L7.5 4.8 L9 7.5Z" fill="#c4c4c4" stroke="none"/></svg>
<div class="t" style="left:1524px;top:431.5px;font-size:12.7px;letter-spacing:0px;color:#c4c4c4;">Normal Color</div>
<div class="a" style="left:1659px;top:431px;width:225px;height:16px;background:#fff"></div>
<div class="a" style="left:1884px;top:430px;width:19px;height:18px;background:#3a3a3a;border:1px solid #262626;border-radius:0 3px 3px 0"></div>
<svg style="left:1888px;top:433px" width="12" height="12" viewBox="0 0 12 12"><path d="M7.5 1.2 Q9.5 -0.5 11 1 T10.8 4.5 L9.8 5.5 L10.5 6.2 L9.6 7.1 L4.9 2.4 L5.8 1.5 L6.5 2.2Z" fill="#c4c4c4"/><path d="M6 4.2 L7.8 6 L3.2 10.6 L1 11.3 L0.7 11 L1.4 8.8Z" fill="#c4c4c4"/></svg>
<div class="t" style="left:1524px;top:451.5px;font-size:12.7px;letter-spacing:0px;color:#c4c4c4;">Highlighted Color</div>
<div class="a" style="left:1659px;top:451px;width:225px;height:16px;background:#f5f5f5"></div>
<div class="a" style="left:1884px;top:450px;width:19px;height:18px;background:#3a3a3a;border:1px solid #262626;border-radius:0 3px 3px 0"></div>
<svg style="left:1888px;top:453px" width="12" height="12" viewBox="0 0 12 12"><path d="M7.5 1.2 Q9.5 -0.5 11 1 T10.8 4.5 L9.8 5.5 L10.5 6.2 L9.6 7.1 L4.9 2.4 L5.8 1.5 L6.5 2.2Z" fill="#c4c4c4"/><path d="M6 4.2 L7.8 6 L3.2 10.6 L1 11.3 L0.7 11 L1.4 8.8Z" fill="#c4c4c4"/></svg>
<div class="t" style="left:1524px;top:471.5px;font-size:12.7px;letter-spacing:0px;color:#c4c4c4;">Pressed Color</div>
<div class="a" style="left:1659px;top:471px;width:225px;height:16px;background:#c8c8c8"></div>
<div class="a" style="left:1659px;top:484px;width:225px;height:3px;background:#fff"></div>
<div class="a" style="left:1884px;top:470px;width:19px;height:18px;background:#3a3a3a;border:1px solid #262626;border-radius:0 3px 3px 0"></div>
<svg style="left:1888px;top:473px" width="12" height="12" viewBox="0 0 12 12"><path d="M7.5 1.2 Q9.5 -0.5 11 1 T10.8 4.5 L9.8 5.5 L10.5 6.2 L9.6 7.1 L4.9 2.4 L5.8 1.5 L6.5 2.2Z" fill="#c4c4c4"/><path d="M6 4.2 L7.8 6 L3.2 10.6 L1 11.3 L0.7 11 L1.4 8.8Z" fill="#c4c4c4"/></svg>
<div class="t" style="left:1524px;top:491.5px;font-size:12.7px;letter-spacing:0px;color:#c4c4c4;">Selected Color</div>
<div class="a" style="left:1659px;top:491px;width:225px;height:16px;background:#f5f5f5"></div>
<div class="a" style="left:1884px;top:490px;width:19px;height:18px;background:#3a3a3a;border:1px solid #262626;border-radius:0 3px 3px 0"></div>
<svg style="left:1888px;top:493px" width="12" height="12" viewBox="0 0 12 12"><path d="M7.5 1.2 Q9.5 -0.5 11 1 T10.8 4.5 L9.8 5.5 L10.5 6.2 L9.6 7.1 L4.9 2.4 L5.8 1.5 L6.5 2.2Z" fill="#c4c4c4"/><path d="M6 4.2 L7.8 6 L3.2 10.6 L1 11.3 L0.7 11 L1.4 8.8Z" fill="#c4c4c4"/></svg>
<div class="t" style="left:1524px;top:511.5px;font-size:12.7px;letter-spacing:0px;color:#c4c4c4;">Disabled Color</div>
<div class="a" style="left:1659px;top:511px;width:225px;height:16px;background:#c8c8c8"></div>
<div class="a" style="left:1659px;top:524px;width:113px;height:3px;background:#fff"></div><div class="a" style="left:1772px;top:524px;width:112px;height:3px;background:#000"></div>
<div class="a" style="left:1884px;top:510px;width:19px;height:18px;background:#3a3a3a;border:1px solid #262626;border-radius:0 3px 3px 0"></div>
<svg style="left:1888px;top:513px" width="12" height="12" viewBox="0 0 12 12"><path d="M7.5 1.2 Q9.5 -0.5 11 1 T10.8 4.5 L9.8 5.5 L10.5 6.2 L9.6 7.1 L4.9 2.4 L5.8 1.5 L6.5 2.2Z" fill="#c4c4c4"/><path d="M6 4.2 L7.8 6 L3.2 10.6 L1 11.3 L0.7 11 L1.4 8.8Z" fill="#c4c4c4"/></svg>
<div class="t" style="left:1524px;top:531.5px;font-size:12.7px;letter-spacing:0px;color:#c4c4c4;">Color Multiplier</div>
<div class="a" style="left:1663px;top:538px;width:185px;height:2px;background:#5e5e5e"></div>
<div class="a" style="left:1658px;top:534px;width:10px;height:10px;border-radius:5px;background:#999"></div>
<div class="fld" style="left:1853px;top:530px;width:50px"></div>
<div class="t" style="left:1856px;top:531.5px;font-size:12.7px;letter-spacing:0px;color:#c4c4c4;">1</div>
<div class="t" style="left:1524px;top:551.5px;font-size:12.7px;letter-spacing:0px;color:#c4c4c4;">Fade Duration</div>
<div class="fld" style="left:1658px;top:550px;width:245px"></div>
<div class="t" style="left:1661px;top:551.5px;font-size:12.7px;letter-spacing:0px;color:#c4c4c4;">0.1</div>
<div class="t" style="left:1509px;top:579.5px;font-size:12.7px;letter-spacing:0px;color:#c4c4c4;">Navigation</div>
<div class="dd" style="left:1658px;top:579px;width:245px;height:17px;background:#515151"></div>
<div class="t" style="left:1662px;top:579.5px;font-size:12.7px;letter-spacing:0px;color:#c4c4c4;">Automatic</div>
<svg style="left:1887px;top:585px" width="8" height="5" viewBox="0 0 8 5"><path d="M0 0 H8 L4 4.5 Z" fill="#c4c4c4"/></svg>
<div class="a" style="left:1657px;top:601px;width:246px;height:16px;background:#585858;border-radius:3px"></div>
<div class="t" style="left:1754px;top:601.0px;font-size:12.7px;letter-spacing:0px;color:#c4c4c4;">Visualize</div>
<div class="a" style="left:1508px;top:628px;width:395px;height:76px;background:#414141;border:1px solid #242424;border-radius:3px"></div>
<div class="a" style="left:1509px;top:629px;width:393px;height:19px;background:#353535;border-bottom:1px solid #242424;border-radius:2px 2px 0 0"></div>
<div class="t" style="left:1516px;top:630.5px;font-size:12.7px;letter-spacing:0px;color:#c4c4c4;">On Click ()</div>
<div class="a" style="left:1515px;top:660px;width:10px;height:1px;background:#6a6a6a"></div><div class="a" style="left:1515px;top:663px;width:10px;height:1px;background:#6a6a6a"></div>
<div class="dd" style="left:1529px;top:656px;width:110px;height:17px;background:#515151"></div>
<div class="t" style="left:1533px;top:655.6px;font-size:12.7px;letter-spacing:0px;color:#c4c4c4;">Runtime Only</div>
<svg style="left:1623px;top:662px" width="8" height="5" viewBox="0 0 8 5"><path d="M0 0 H8 L4 4.5 Z" fill="#c4c4c4"/></svg>
<div class="dd" style="left:1644px;top:656px;width:252px;height:17px;background:#515151"></div>
<div class="t" style="left:1648px;top:655.6px;font-size:12.7px;letter-spacing:0px;color:#c4c4c4;"><span style="letter-spacing:.26px">MeshToggler.Toggle</span></div>
<svg style="left:1880px;top:662px" width="8" height="5" viewBox="0 0 8 5"><path d="M0 0 H8 L4 4.5 Z" fill="#c4c4c4"/></svg>
<div class="a" style="left:1529px;top:675px;width:110px;height:18px;background:#2a2a2a;border:1px solid #3a79bb;border-radius:3px"></div>
<div class="a" style="left:1621px;top:677px;width:16px;height:14px;background:#373737"></div>
<svg style="left:1533px;top:678px" width="10" height="12" viewBox="0 0 10 12"><path d="M0.500000000000001 0 H7 L10 3 V11.5 Q10 12 9.5 12 H0.5 Q0 12 0 11.5 V0.5 Q0 0 0.5 0Z" fill="#e8e8e8"/><path d="M4 3.500000000000001 L3.4 9.5 M6.6 3.5 L6 9.5 M2 5.4 H8 M1.8 7.6 H7.8" stroke="#2e7d32" stroke-width="1" fill="none"/></svg>
<div class="a" style="left:1545px;top:676.7px;width:76px;height:16px;overflow:hidden"><div class="t" style="left:0;top:0;font-size:13px;letter-spacing:.2px">Grid (Mesh Toggler)</div></div>
<svg style="left:1624px;top:679px" width="10" height="10" viewBox="0 0 10 10" fill="none" stroke="#c4c4c4" stroke-width="1"><circle cx="5" cy="5" r="4.4"/><circle cx="5" cy="5" r="1.6" fill="#c4c4c4" stroke="none"/></svg>
<div class="a" style="left:1836px;top:703px;width:57px;height:21px;background:#414141;border:1px solid #242424;border-top:none;border-radius:0 0 3px 3px"></div>
<svg style="left:1846px;top:708px" width="10" height="10" viewBox="0 0 10 10" stroke="#d8d8d8" stroke-width="1.6"><path d="M5 0.5 V9.5 M0.5 5 H9.5"/></svg>
<svg style="left:1872px;top:712px" width="8" height="2" viewBox="0 0 8 2"><rect width="8" height="2" fill="#d8d8d8"/></svg>
<div class="a" style="left:1490px;top:733px;width:417px;height:1px;background:#1f1f1f"></div>
<div class="a" style="left:1510px;top:744px;width:24px;height:24px;background:#fff"></div>
<div class="t" style="left:1546px;top:738.9px;font-size:12.7px;letter-spacing:0.47px;color:#9a9a9a;">Default UI Material (Material)</div>
<svg style="left:1878px;top:742px" width="10" height="10" viewBox="0 0 10 10"><circle cx="5" cy="5" r="5" fill="#d0d0d0"/><path d="M3.4 3.8 A1.7 1.7 0 1 1 5.6 5.4 Q5 5.7 5 6.4" fill="none" stroke="#3e3e3e" stroke-width="1.3"/><rect x="4.3" y="7.2" width="1.4" height="1.4" fill="#3e3e3e"/></svg>
<svg style="left:1898px;top:742px" width="3" height="11" viewBox="0 0 3 11" fill="#c4c4c4"><rect x="0.4" y="0" width="2.2" height="2.2"/><rect x="0.4" y="4.1" width="2.2" height="2.2"/><rect x="0.4" y="8.2" width="2.2" height="2.2"/></svg>
<div class="t" style="left:1543px;top:763.0px;font-size:12.7px;letter-spacing:0.2px;color:#6f6f6f;">Shader</div>
<div class="dd" style="left:1594px;top:763px;width:212px;height:17px;background:#444"></div>
<div class="t" style="left:1598px;top:763.0px;font-size:12.7px;letter-spacing:0px;color:#7a7a7a;">UI/Default</div>
<svg style="left:1790px;top:769px" width="8" height="5" viewBox="0 0 8 5"><path d="M0 0 H8 L4 4.5 Z" fill="#7a7a7a"/></svg>
<div class="a" style="left:1810px;top:763px;width:46px;height:17px;background:#515151;border:1px solid #303030;border-radius:3px"></div>
<div class="t" style="left:1817px;top:763.0px;font-size:12.7px;letter-spacing:0.2px;color:#c4c4c4;">Edit...</div>
<div class="a" style="left:1860px;top:763px;width:43px;height:17px;background:#515151;border:1px solid #303030;border-radius:3px"></div>
<svg style="left:1868px;top:766px" width="11" height="10" viewBox="0 0 11 10" fill="none" stroke="#c4c4c4" stroke-width="1.1"><path d="M0 1 H2 M3.500000000000001 1 H11 M2 5 H4 M5.5 5 H11 M2 9 H4 M5.5 9 H11"/></svg>
<svg style="left:1889px;top:769px" width="8" height="5" viewBox="0 0 8 5"><path d="M0 0 H8 L4 4.5 Z" fill="#c4c4c4"/></svg>
<svg style="left:1497px;top:774px" width="7" height="8" viewBox="0 0 7 8"><path d="M0 0 L7 4 L0 8Z" fill="#6a6a6a"/></svg>
<div class="a" style="left:1490px;top:788px;width:417px;height:1px;background:#1f1f1f"></div>
<div class="a" style="left:1490px;top:799px;width:417px;height:1px;background:#1f1f1f"></div>
<div class="a" style="left:1585px;top:809px;width:228px;height:22px;background:#585858;border-radius:3px"></div>
<div class="t" style="left:1652px;top:811.8px;font-size:12.7px;letter-spacing:0.2px;color:#d8d8d8;">Add Component</div>
<div class="a" style="left:1490px;top:836px;width:430px;height:1px;background:#1f1f1f"></div>
<div class="a" style="left:1490px;top:837px;width:430px;height:20px;background:#383838"></div>
<div class="a" style="left:1490px;top:857px;width:430px;height:1px;background:#232323"></div>
<div class="t b" style="left:1497px;top:839px;font-size:13px;color:#d0d0d0">Grid</div>
<svg style="left:1528px;top:845px" width="8" height="5" viewBox="0 0 8 5"><path d="M0 0 H8 L4 4.5 Z" fill="#c4c4c4"/></svg>
<div class="a" style="left:1540px;top:837px;width:1px;height:20px;background:#2a2a2a"></div>
<div class="a" style="left:1902px;top:837px;width:1px;height:20px;background:#2a2a2a"></div>
<div class="a" style="left:1544px;top:846px;width:357px;height:1px;background:#5a5a5a"></div><div class="a" style="left:1544px;top:849px;width:357px;height:1px;background:#5a5a5a"></div>
<svg style="left:1911px;top:842px" width="3" height="11" viewBox="0 0 3 11" fill="#c4c4c4"><rect x="0.4" y="0" width="2.2" height="2.2"/><rect x="0.4" y="4.1" width="2.2" height="2.2"/><rect x="0.4" y="8.2" width="2.2" height="2.2"/></svg>
<div class="a" style="left:1490px;top:858px;width:430px;height:153px;background:#313131"></div>
<div class="a" style="left:1490px;top:1011px;width:430px;height:1px;background:#232323"></div>
<svg style="left:1628px;top:858px" width="154" height="153" viewBox="0 0 154 153">
<defs><pattern id="ck" width="26" height="26" patternUnits="userSpaceOnUse"><rect width="26" height="26" fill="#4c4c4c"/><rect width="13" height="13" fill="#616161"/><rect x="13" y="13" width="13" height="13" fill="#616161"/></pattern><filter id="bl" x="-10%" y="-10%" width="120%" height="120%"><feGaussianBlur stdDeviation="1.6"/></filter></defs>
<rect width="154" height="153" fill="url(#ck)"/>
<rect x="10" y="9" width="134" height="132" rx="34" fill="#2a2a2a" opacity="0.55" filter="url(#bl)"/>
<rect x="13" y="11" width="128" height="127" rx="32" fill="#f6f6f6" filter="url(#bl)"/>
<path d="M47.5 0 V153 M105.5 0 V153 M0 49.5 H154 M0 107.5 H154" stroke="#333" stroke-width="0.8" stroke-dasharray="6.5 4" fill="none"/>
<text x="77" y="131" text-anchor="middle" font-family="Liberation Sans, sans-serif" font-weight="bold" font-size="13" fill="#e8e8e8" stroke="#222" stroke-width="2.2" paint-order="stroke" >Grid</text>
<text x="77" y="146" text-anchor="middle" font-family="Liberation Sans, sans-serif" font-weight="bold" font-size="13" fill="#e8e8e8" stroke="#222" stroke-width="2.2" paint-order="stroke" letter-spacing="0.35">Image Size: 32x32</text>
</svg>
<!-- Status bar -->
<div class="a" style="left:0;top:1018px;width:1920px;height:22px;background:#191919"></div>
<div class="a" style="left:1490px;top:1012px;width:430px;height:6px;background:#383838"></div>
<svg style="left:2px;top:1022px" width="14" height="15" viewBox="0 0 14 15"><path d="M7 0 A7 7 0 0 1 7 14 Q5.5 14 4.2 13.4 L0.5 14.8 L1.6 11.4 A7 7 0 0 1 7 0Z" fill="#e0e0e0"/><rect x="6" y="2.8" width="2" height="5.6" fill="#191919"/><rect x="6" y="9.6" width="2" height="2" fill="#191919"/></svg>
<div class="t" style="left:20.5px;top:1021.7px;font-size:12.7px;color:#bdbdbd">[TMP Essential Resources] have been imported.</div>
<div class="a" style="left:1815px;top:1019px;width:1px;height:20px;background:#262626"></div>
<div class="a" style="left:1841px;top:1019px;width:1px;height:20px;background:#262626"></div>
<div class="a" style="left:1868px;top:1019px;width:1px;height:20px;background:#262626"></div>
<div class="a" style="left:1894px;top:1019px;width:1px;height:20px;background:#262626"></div>
<svg style="left:1821px;top:1022px" width="15" height="15" viewBox="0 0 15 15" fill="#b8b8b8"><ellipse cx="7.5" cy="9" rx="3.6" ry="4.5"/><circle cx="7.5" cy="3.8" r="2.2"/><path d="M4 7 L1.2 5 M11 7 L13.8 5 M3.8 9.5 H0.8 M11.2 9.5 H14.2 M4.2 12 L1.8 14 M10.8 12 L13.2 14" stroke="#b8b8b8" stroke-width="1.1"/><path d="M1.5 1 L13.5 14" stroke="#191919" stroke-width="2.4"/><path d="M1.5 1 L13.5 14" stroke="#b8b8b8" stroke-width="1.1"/></svg>
<svg style="left:1847px;top:1022px" width="15" height="15" viewBox="0 0 15 15" fill="#b8b8b8"><ellipse cx="7.5" cy="3.6" rx="5.5" ry="2.6"/><path d="M2 5.5 Q7.5 9 13 5.5 V8 Q7.5 11.5 2 8Z M2 9.5 Q7.5 13 13 9.5 V11.5 Q7.5 15 2 11.5Z"/><path d="M1.5 1 L13.5 14" stroke="#191919" stroke-width="2.4"/><path d="M1.5 1 L13.5 14" stroke="#b8b8b8" stroke-width="1.1"/></svg>
<svg style="left:1873px;top:1022px" width="15" height="15" viewBox="0 0 15 15" fill="none" stroke="#b8b8b8" stroke-width="1.2"><path d="M2 7.5 A5.5 5.5 0 0 1 12 4.300000000000001 M13 7.5 A5.5 5.5 0 0 1 3 10.7"/><path d="M12.5 1.5 V4.6 H9.4 M2.5 13.5 V10.4 H5.6"/><circle cx="7.5" cy="6.3" r="1.6" fill="#b8b8b8" stroke="none"/><path d="M4.8 10.5 Q7.5 7.5 10.2 10.5Z" fill="#b8b8b8" stroke="none"/><path d="M1.5 1 L13.5 14" stroke="#191919" stroke-width="2.6"/><path d="M1.5 1 L13.5 14" stroke-width="1.1"/></svg>
<svg style="left:1899px;top:1022px" width="15" height="15" viewBox="0 0 15 15" fill="none" stroke="#c4c4c4" stroke-width="1.1"><circle cx="7.5" cy="7.5" r="6.6"/><path d="M4.3 7.6 L6.6 10 L10.8 5.2" stroke-width="1.5"/></svg>
<!-- Taskbar -->
<div class="a" style="left:0;top:1040px;width:1920px;height:40px;background:#1c1c1c"></div>
<svg style="left:16px;top:1052px" width="16" height="16" viewBox="0 0 16 16" fill="#fff"><path d="M0 2.3 L6.5 1.4 V7.6 H0Z M7.3 1.3 L16 0 V7.6 H7.3Z M0 8.4 H6.5 V14.6 L0 13.7Z M7.3 8.4 H16 V16 L7.3 14.7Z"/></svg>
<div class="a" style="left:48px;top:1040px;width:288px;height:40px;background:#363636;border:1px solid #585858;border-bottom:none"></div>
<svg style="left:60px;top:1052px" width="17" height="17" viewBox="0 0 17 17" fill="none" stroke="#fff" stroke-width="1.3"><circle cx="10.5" cy="6.5" r="5.2"/><path d="M6.8 10.2 L0.8 16.2"/></svg>
<div class="t" style="left:88px;top:1050.7px;font-size:14.6px;line-height:20px;color:#f0f0f0">Escriu aquí per cercar</div>
<svg style="left:256px;top:1041px" width="80" height="39" viewBox="0 0 80 39"><path d="M0 39 L14 30 H70 L80 39Z" fill="#e2b986"/><path d="M14 30 H70 L72 32 H12Z" fill="#c99a63"/><g transform="rotate(-14 28 24)"><path d="M14 16 L27 13 L29 29 L16 32Z" fill="#f4f6ef" stroke="#4a8d3c" stroke-width="1.4"/><path d="M27 13 L40 14 L41 30 L29 29Z" fill="#f4f6ef" stroke="#4a8d3c" stroke-width="1.4"/><path d="M17 19 L25 17.5 M17.5 22 L25.5 20.5 M18 25 L26 23.5 M30 17 L38 17.5 M30.5 20 L38.5 20.5 M31 23 L39 23.5" stroke="#9aa" stroke-width="0.8"/></g><path d="M33 20 L44 7 L47 9.5 L36 22.5 L32 24Z" fill="#f2b13c"/><path d="M44 7 L46 4.5 L49 7 L47 9.5Z" fill="#e4574c"/><path d="M52 16 Q52 6 60 6 Q68 6 68 16 V30 Q68 34 64 34 H56 Q52 34 52 30Z" fill="#2f8be6"/><path d="M56 6 Q60 -2 64 6" fill="none" stroke="#1c5fb3" stroke-width="2"/><path d="M53.500000000000014 24 Q60 18 66.5 24 V31 Q66.5 32.5 65 32.5 H55 Q53.5 32.5 53.5 31Z" fill="#1f6fd0"/><path d="M54 32 H66" stroke="#b07ae8" stroke-width="2"/></svg>
<svg style="left:351px;top:1051px" width="18" height="18" viewBox="0 0 18 18"><circle cx="9" cy="9" r="6.8" fill="none" stroke="#fff" stroke-width="2"/></svg>
<svg style="left:399px;top:1052px" width="18" height="16" viewBox="0 0 18 16" fill="none" stroke="#fff" stroke-width="1.3"><rect x="2.5" y="3.5" width="9" height="9"/><path d="M0.6 3 V1 H4 M10 1 H13.4 V3 M0.6 13 V15 H4 M10 15 H13.4 V13" /><path d="M16.3 3 V13" stroke-width="1.6"/><rect x="15.3" y="6" width="2" height="2.4" fill="#fff" stroke="none"/></svg>
<svg style="left:446px;top:1048px" width="25" height="25" viewBox="0 0 25 25"><rect width="25" height="25" rx="4.5" fill="#f07d22"/><path d="M6 8 Q6 5.5 8.5 5.5 Q11 5.5 12.5 8 Q14 5.5 16.5 5.5 Q19 5.5 19 8 Q19 10.5 17.5 12.5 Q19 14.5 19 17 Q19 19.5 16.5 19.5 Q14 19.5 12.5 17 Q11 19.5 8.5 19.5 Q6 19.5 6 17 Q6 14.5 7.5 12.5 Q6 10.5 6 8Z" fill="#fff"/><circle cx="9.6" cy="9.4" r="1.7" fill="#f07d22"/><circle cx="15.4" cy="9.4" r="1.7" fill="#f07d22"/><circle cx="9.6" cy="15.6" r="1.7" fill="#f07d22"/><circle cx="15.4" cy="15.6" r="1.7" fill="#f07d22"/></svg>
<svg style="left:496px;top:1049px" width="23" height="21" viewBox="0 0 23 21"><path d="M0 2 Q0 1 1 1 H8 L10 3 H22 Q23 3 23 4 V18 H0Z" fill="#f0b429"/><path d="M0 6 H23 V19 Q23 20 22 20 H1 Q0 20 0 19Z" fill="#fad35f"/><path d="M5 13 H18 V20 H14.5 V16.5 H8.5 V20 H5Z" fill="#3d8fd9"/></svg>
<svg style="left:545px;top:1048px" width="25" height="25" viewBox="0 0 25 25"><circle cx="12.5" cy="12.5" r="12" fill="#fff"/><path d="M12.5 0.5 A12 12 0 0 1 22.9 6.5 H12.5 A6 6 0 0 0 7.3 9.5 L2.100000000000001 6.5 A12 12 0 0 1 12.5 0.5Z" fill="#e33b2e"/><path d="M22.9 6.5 A12 12 0 0 1 12.5 24.5 L17.7 15.5 A6 6 0 0 0 17.7 9.5 L12.5 6.5Z" fill="#fbc116"/><path d="M2.1 6.5 L7.3 15.5 A6 6 0 0 0 12.5 18.5 L17.7 15.5 L12.5 24.5 A12 12 0 0 1 2.1 6.5Z" fill="#2ea44f"/><circle cx="12.5" cy="12.5" r="5.6" fill="#fff"/><circle cx="12.5" cy="12.5" r="4.4" fill="#3f86ee"/></svg>
<svg style="left:594px;top:1048px" width="25" height="25" viewBox="0 0 25 25"><circle cx="12.5" cy="12.5" r="12" fill="#fff"/><path d="M12.5 0.5 A12 12 0 0 1 22.9 6.5 H12.5 A6 6 0 0 0 7.3 9.5 L2.100000000000001 6.5 A12 12 0 0 1 12.5 0.5Z" fill="#e33b2e"/><path d="M22.9 6.5 A12 12 0 0 1 12.5 24.5 L17.7 15.5 A6 6 0 0 0 17.7 9.5 L12.5 6.5Z" fill="#fbc116"/><path d="M2.1 6.5 L7.3 15.5 A6 6 0 0 0 12.5 18.5 L17.7 15.5 L12.5 24.5 A12 12 0 0 1 2.1 6.5Z" fill="#2ea44f"/><circle cx="12.5" cy="12.5" r="5.6" fill="#fff"/><circle cx="12.5" cy="12.5" r="4.4" fill="#3f86ee"/></svg>
<svg style="left:692px;top:1048px" width="25" height="25" viewBox="0 0 25 25"><circle cx="12.5" cy="12.5" r="12" fill="#fff"/><path d="M12.5 0.5 A12 12 0 0 1 22.9 6.5 H12.5 A6 6 0 0 0 7.3 9.5 L2.100000000000001 6.5 A12 12 0 0 1 12.5 0.5Z" fill="#e33b2e"/><path d="M22.9 6.5 A12 12 0 0 1 12.5 24.5 L17.7 15.5 A6 6 0 0 0 17.7 9.5 L12.5 6.5Z" fill="#fbc116"/><path d="M2.1 6.5 L7.3 15.5 A6 6 0 0 0 12.5 18.5 L17.7 15.5 L12.5 24.5 A12 12 0 0 1 2.1 6.5Z" fill="#2ea44f"/><circle cx="12.5" cy="12.5" r="5.6" fill="#fff"/><circle cx="12.5" cy="12.5" r="4.4" fill="#3f86ee"/></svg>
<svg style="left:607px;top:1057px" width="16" height="16" viewBox="0 0 16 16"><circle cx="8" cy="8" r="7.5" fill="#1d1d1d"/><circle cx="8" cy="9.5" r="4.5" fill="#f1d2b8"/><path d="M1.5 8 Q2 1.5 8 1.5 Q14 1.5 14.5 8 Q11 7 9 4.5 Q6 7.5 1.5 8Z" fill="#111"/></svg>
<svg style="left:644px;top:1048px" width="22" height="22" viewBox="0 0 24 24"><rect x="0.8" y="0.8" width="22.4" height="22.4" fill="#0c1f5e" stroke="#8fc2ff" stroke-width="1.6"/></svg>
<div class="t b" style="left:647px;top:1050px;font-size:13.5px;line-height:18px;color:#8fc2ff;letter-spacing:-0.3px">Ps</div>
<svg style="left:704px;top:1059px" width="15" height="15" viewBox="0 0 15 15"><circle cx="7.5" cy="7.5" r="7.5" fill="#7a1fa2"/></svg>
<div class="t" style="left:708.5px;top:1059px;font-size:10px;line-height:15px;color:#fff">J</div>
<svg style="left:740px;top:1048px" width="25" height="24" viewBox="0 0 25 24"><path d="M18 0.5 L24.5 3.5 V20.5 L18 23.5 L6.5 13.5 L2.5 17 L0.5 16 V8 L2.5 7 L6.5 10.5Z" fill="#a479e0"/><path d="M18 0.5 L24.5 3.5 V20.5 L18 23.5Z" fill="#c4a2f2"/><path d="M18 7 L10.500000000000002 12 L18 17Z" fill="#1c1c1c"/><path d="M2.5 9.500000000000002 L5 12 L2.5 14.5Z" fill="#1c1c1c"/></svg>
<div class="a" style="left:778px;top:1040px;width:48px;height:40px;background:#474747"></div>
<svg style="left:791px;top:1048px" width="22" height="24" viewBox="0 0 22 24"><path d="M11 0.5 L21 6.3 V17.7 L11 23.5 L1 17.7 V6.3 Z" fill="#1e1e1e"/><path d="M11 3 L17.6 6.8 L15.2 8.2 L11 5.8 L6.8 8.2 L4.4 6.8 Z M3.6 8.2 L6 9.6 V14.4 L10.2 16.8 V19.6 L3.6 15.8 Z M18.4 8.2 V15.8 L11.8 19.6 V16.8 L16 14.4 V9.6 Z M11 8.6 L14.6 10.7 L11 12.8 L7.4 10.7 Z" fill="#f4f4f4"/><path d="M11 12.6 V17" stroke="#f4f4f4" stroke-width="2"/></svg>
<div class="a" style="left:488px;top:1078px;width:40px;height:2px;background:#76b9ed"></div>
<div class="a" style="left:586px;top:1078px;width:40px;height:2px;background:#76b9ed"></div>
<div class="a" style="left:635px;top:1078px;width:40px;height:2px;background:#76b9ed"></div>
<div class="a" style="left:684px;top:1078px;width:40px;height:2px;background:#76b9ed"></div>
<div class="a" style="left:733px;top:1078px;width:40px;height:2px;background:#76b9ed"></div>
<div class="a" style="left:778px;top:1078px;width:48px;height:2px;background:#76b9ed"></div>
<svg style="left:1501px;top:1047px" width="26" height="24" viewBox="0 0 26 24"><circle cx="11" cy="13" r="9" fill="#f59a23"/><path d="M2 9 Q1 4.5 5.5 4.5 Q7 1 11 2.5 Q14 2.5 14 6 Q15.500000000000004 9 12 9Z" fill="#c9d8f0"/><path d="M11 22 Q9 17.5 13.5 17.5 Q15 14.5 18.5 15.5 Q22 15 22.500000000000004 18.5 Q25 19 24.500000000000004 22Z" fill="#c9d8f0"/><circle cx="19" cy="6" r="5.6" fill="#d93025"/></svg>
<div class="t" style="left:1516.5px;top:1045px;font-size:9px;line-height:12px;color:#fff">1</div>
<div class="t" style="left:1533px;top:1050px;font-size:14.2px;line-height:20px;color:#f0f0f0;letter-spacing:-0.45px">16°C</div>
<div class="t" style="left:1571px;top:1050px;font-size:14.2px;line-height:20px;color:#f0f0f0;letter-spacing:-0.45px">Parc. soleado</div>
<svg style="left:1677px;top:1055px" width="12" height="8" viewBox="0 0 12 8" fill="none" stroke="#fff" stroke-width="1.3"><path d="M0.5 7 L6 1.2 L11.5 7"/></svg>
<svg style="left:1699px;top:1053px" width="17" height="13" viewBox="0 0 17 13" fill="none" stroke="#fff" stroke-width="1.2"><rect x="4.6" y="3.6" width="10.8" height="7"/><path d="M15.8 5.5 V8.7" stroke-width="1.6"/><path d="M1 0.5 V3 M3.5 0.5 V3 M0.3 3 H4.2 V5 Q4.2 6.5 2.25 6.5 Q0.3 6.5 0.3 5Z M2.2 6.5 V9 H4.6" stroke-width="1"/></svg>
<svg style="left:1725px;top:1052px" width="15" height="15" viewBox="0 0 15 15" fill="none" stroke="#fff" stroke-width="1.2"><path d="M1 14 A13 13 0 0 1 14 1" opacity="0.55"/><path d="M4.5 14 A9.5 9.5 0 0 1 14 4.5"/><path d="M8 14 A6 6 0 0 1 14 8"/><circle cx="12.6" cy="12.8" r="1.5" fill="#fff" stroke="none"/></svg>
<svg style="left:1746px;top:1052px" width="18" height="15" viewBox="0 0 18 15" fill="none" stroke="#fff" stroke-width="1.1"><path d="M0.6 5 H3.5 L7 1.5 V13.5 L3.5 10 H0.6Z"/><path d="M9.5 5.2 Q10.8 7.5 9.5 9.8 M11.8 3.4 Q14 7.5 11.8 11.6 M14.2 1.6 Q17.5 7.5 14.2 13.4"/></svg>
<div class="t" style="left:1774px;top:1050px;font-size:12.5px;line-height:20px;color:#f0f0f0;letter-spacing:-0.2px">CAT</div>
<div class="t" style="left:1807px;top:1042px;width:57px;text-align:center;font-size:12px;line-height:18px;color:#f0f0f0;letter-spacing:-0.3px">13:57</div>
<div class="t" style="left:1805px;top:1060px;width:61px;text-align:center;font-size:12px;line-height:18px;color:#f0f0f0;letter-spacing:-0.3px">10/12/2023</div>
<svg style="left:1878px;top:1052px" width="17" height="16" viewBox="0 0 17 16"><path d="M0 0 H17 V12.5 H10.5 L8.5 15.5 L6.5 12.5 H0Z" fill="#fff"/><path d="M3 3.5 H14 M3 6.2 H14 M3 8.9 H10" stroke="#1c1c1c" stroke-width="1.1"/></svg>
<div class="a" style="left:1915px;top:1041px;width:1px;height:39px;background:#6a6a6a"></div>
<!-- annotation arrows -->
<svg style="left:0;top:0;pointer-events:none" width="1920" height="1080" viewBox="0 0 1920 1080">
<path d="M848.0 538.5 L928.0 536.1" stroke="#fff" stroke-width="2.2" fill="none"/>
<path d="M947.0 535.5 L926.2 540.9 L925.9 531.3Z" fill="#fff"/>
<path d="M1022.0 426.0 L1542.8 669.0" stroke="#fff" stroke-width="2.2" fill="none"/>
<path d="M1560.0 677.0 L1538.9 672.5 L1543.0 663.8Z" fill="#fff"/>
<path d="M1020.0 531.0 L1495.3 619.3" stroke="#fff" stroke-width="2.2" fill="none"/>
<path d="M1514.0 622.8 L1492.5 623.7 L1494.2 614.2Z" fill="#fff"/>
<path d="M1709.0 731.5 L1727.4 692.7" stroke="#fff" stroke-width="2.2" fill="none"/>
<path d="M1735.5 675.5 L1730.9 696.5 L1722.2 692.4Z" fill="#fff"/>
<path d="M1799.5 851.0 L1837.5 741.9" stroke="#fff" stroke-width="2.2" fill="none"/>
<path d="M1843.8 724.0 L1841.4 745.4 L1832.4 742.2Z" fill="#fff"/>
</svg>
</div>
</body></html>
